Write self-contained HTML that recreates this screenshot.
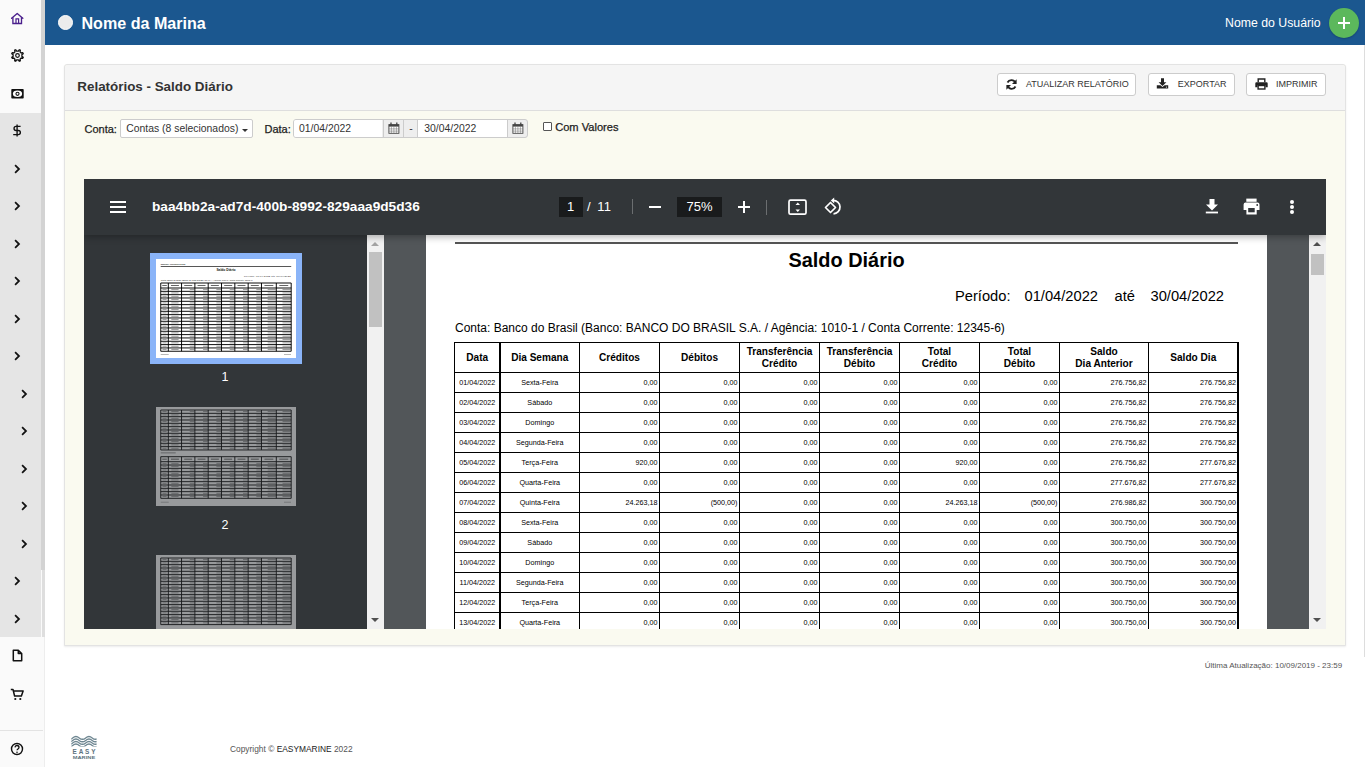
<!DOCTYPE html>
<html><head><meta charset="utf-8">
<style>
*{box-sizing:border-box;margin:0;padding:0}
html,body{width:1365px;height:767px;overflow:hidden;background:#fff;font-family:"Liberation Sans",sans-serif;color:#333}
.abs{position:absolute}
.t{position:absolute;white-space:nowrap;line-height:1}
#side{position:absolute;left:0;top:0;width:45px;height:767px;background:#fafafa;border-right:1px solid #ededed}
#sidegrey{position:absolute;left:0;top:113px;width:41px;height:524px;background:#e5e5e5}
#strip{position:absolute;left:41px;top:0;width:4px;height:570px;background:#d3d3d3}
#strip2{position:absolute;left:42px;top:570px;width:3px;height:67px;background:#dedede}
#header{position:absolute;left:45px;top:0;width:1320px;height:45px;background:#1b578f}
#panel{position:absolute;left:64px;top:64px;width:1282px;height:582px;background:#fafaf0;border:1px solid #e3e3e3;border-radius:3px 3px 0 0;box-shadow:0 1px 2px rgba(0,0,0,.08)}
#phead{position:absolute;left:0;top:0;width:1280px;height:46px;background:#f5f5f5;border-bottom:1px solid #dedede;border-radius:3px 3px 0 0}
.btn{position:absolute;top:8px;height:23px;background:#fff;border:1px solid #ccc;border-radius:3px}
.btn .t{font-size:9px;color:#333;top:6.2px}
#pdf{position:absolute;left:84px;top:179px;width:1242px;height:450px;background:#525659;overflow:hidden}
#tb{position:absolute;left:0;top:0;width:1242px;height:56px;background:#323639;box-shadow:0 2px 7px rgba(0,0,0,.3);z-index:3}
#tb .t{color:#fff}
#thumbs{position:absolute;left:0;top:56px;width:283px;height:394px;background:#323639}
.sbt{position:absolute;background:#f1f1f1;width:17px}
.sbthumb{position:absolute;background:#c1c1c1;left:2px;width:13px}
#page{position:absolute;left:342px;top:56px;width:841px;height:400px;background:#fff;overflow:hidden}
#page .t{color:#000}
.vl{position:absolute;width:1.6px;background:#000}
.hl{position:absolute;height:1.6px;background:#000}
.th{position:absolute;display:flex;align-items:center;justify-content:center;text-align:center;font-weight:bold;font-size:10.1px;line-height:11.6px;color:#000}
.td{position:absolute;height:20px;line-height:20px;font-size:7.2px;color:#000;white-space:nowrap}
.td.c{text-align:center}
.td.r{text-align:right;padding-right:2px}
</style></head><body>
<div id="side"></div>
<div id="sidegrey"></div>
<div id="strip"></div>
<div id="strip2"></div>
<!-- sidebar icons -->
<svg class="abs" style="left:11px;top:12px" width="13" height="13" viewBox="0 0 13 13"><path d="M0.6 6.2L6.2 1.5l5.6 4.7" fill="none" stroke="#4a1f8c" stroke-width="1.35" stroke-linecap="round" stroke-linejoin="round"/><path d="M1.9 5.2v6.3h8.6V5.2" fill="none" stroke="#4a1f8c" stroke-width="1.35"/><path d="M5 11.5V6.9h2.6v4.6" fill="none" stroke="#4a1f8c" stroke-width="1.2"/></svg>
<svg class="abs" style="left:11px;top:49px" width="13" height="13" viewBox="0 0 13 13"><path d="M10.91 7.38 L12.25 8.22 L11.78 9.35 L10.24 9.00 L9.00 10.24 L9.35 11.78 L8.22 12.25 L7.38 10.91 L5.62 10.91 L4.78 12.25 L3.65 11.78 L4.00 10.24 L2.76 9.00 L1.22 9.35 L0.75 8.22 L2.09 7.38 L2.09 5.62 L0.75 4.78 L1.22 3.65 L2.76 4.00 L4.00 2.76 L3.65 1.22 L4.78 0.75 L5.62 2.09 L7.38 2.09 L8.22 0.75 L9.35 1.22 L9.00 2.76 L10.24 4.00 L11.78 3.65 L12.25 4.78 L10.91 5.62Z" fill="none" stroke="#111" stroke-width="1.3" stroke-linejoin="round"/><circle cx="6.5" cy="6.5" r="1.8" fill="none" stroke="#111" stroke-width="1.2"/></svg>
<svg class="abs" style="left:11px;top:89px" width="13" height="10" viewBox="0 0 13 10"><rect x="0.3" y="0" width="12.4" height="9.6" rx="0.8" fill="#111"/><ellipse cx="6.5" cy="4.8" rx="4.6" ry="3.3" fill="#fff"/><circle cx="6.5" cy="4.8" r="2.1" fill="#111"/><circle cx="6.5" cy="4.8" r="1" fill="#fff"/></svg>
<svg class="abs" style="left:11.8px;top:124px" width="10" height="13" viewBox="0 0 10 13"><path d="M8.6 2.4H4.1a2.05 2.05 0 000 4.1h2.2a2.05 2.05 0 010 4.1H1.2M5.1 .4v12.2" fill="none" stroke="#111" stroke-width="1.35"/></svg>
<svg class="abs" style="left:14px;top:163.9px" width="7" height="10" viewBox="0 0 7 10"><path d="M1.1 1.2l3.9 3.8-3.9 3.8" fill="none" stroke="#111" stroke-width="1.75"/></svg>
<svg class="abs" style="left:14px;top:200.9px" width="7" height="10" viewBox="0 0 7 10"><path d="M1.1 1.2l3.9 3.8-3.9 3.8" fill="none" stroke="#111" stroke-width="1.75"/></svg>
<svg class="abs" style="left:14px;top:238.9px" width="7" height="10" viewBox="0 0 7 10"><path d="M1.1 1.2l3.9 3.8-3.9 3.8" fill="none" stroke="#111" stroke-width="1.75"/></svg>
<svg class="abs" style="left:14px;top:275.9px" width="7" height="10" viewBox="0 0 7 10"><path d="M1.1 1.2l3.9 3.8-3.9 3.8" fill="none" stroke="#111" stroke-width="1.75"/></svg>
<svg class="abs" style="left:14px;top:313.9px" width="7" height="10" viewBox="0 0 7 10"><path d="M1.1 1.2l3.9 3.8-3.9 3.8" fill="none" stroke="#111" stroke-width="1.75"/></svg>
<svg class="abs" style="left:14px;top:350.9px" width="7" height="10" viewBox="0 0 7 10"><path d="M1.1 1.2l3.9 3.8-3.9 3.8" fill="none" stroke="#111" stroke-width="1.75"/></svg>
<svg class="abs" style="left:21px;top:388.9px" width="7" height="10" viewBox="0 0 7 10"><path d="M1.1 1.2l3.9 3.8-3.9 3.8" fill="none" stroke="#111" stroke-width="1.75"/></svg>
<svg class="abs" style="left:21px;top:425.9px" width="7" height="10" viewBox="0 0 7 10"><path d="M1.1 1.2l3.9 3.8-3.9 3.8" fill="none" stroke="#111" stroke-width="1.75"/></svg>
<svg class="abs" style="left:21px;top:463.9px" width="7" height="10" viewBox="0 0 7 10"><path d="M1.1 1.2l3.9 3.8-3.9 3.8" fill="none" stroke="#111" stroke-width="1.75"/></svg>
<svg class="abs" style="left:21px;top:500.9px" width="7" height="10" viewBox="0 0 7 10"><path d="M1.1 1.2l3.9 3.8-3.9 3.8" fill="none" stroke="#111" stroke-width="1.75"/></svg>
<svg class="abs" style="left:21px;top:538.9px" width="7" height="10" viewBox="0 0 7 10"><path d="M1.1 1.2l3.9 3.8-3.9 3.8" fill="none" stroke="#111" stroke-width="1.75"/></svg>
<svg class="abs" style="left:14px;top:575.9px" width="7" height="10" viewBox="0 0 7 10"><path d="M1.1 1.2l3.9 3.8-3.9 3.8" fill="none" stroke="#111" stroke-width="1.75"/></svg>
<svg class="abs" style="left:14px;top:613.9px" width="7" height="10" viewBox="0 0 7 10"><path d="M1.1 1.2l3.9 3.8-3.9 3.8" fill="none" stroke="#111" stroke-width="1.75"/></svg>
<svg class="abs" style="left:12px;top:649px" width="11" height="13" viewBox="0 0 11 13"><path d="M1.3 1.2h5l3.4 3.4v7.2H1.3z M6.3 1.2v3.4h3.4" fill="none" stroke="#111" stroke-width="1.5" stroke-linejoin="round"/></svg>
<svg class="abs" style="left:10px;top:688px" width="14" height="13" viewBox="0 0 14 13"><path d="M.8 1.5h2.2l1.6 6.5h6.8l1.7-5H3.6" fill="none" stroke="#111" stroke-width="1.5" stroke-linejoin="round"/><circle cx="5.3" cy="11" r="1.1" fill="#111"/><circle cx="10.3" cy="11" r="1.1" fill="#111"/></svg>
<div class="abs" style="left:0;top:730px;width:43px;height:1px;background:#e3e3e3"></div>
<svg class="abs" style="left:10px;top:742px" width="14" height="14" viewBox="0 0 14 14"><circle cx="7" cy="7" r="5.5" fill="none" stroke="#111" stroke-width="1.4"/><path d="M5 5.4a2 2 0 114 .2c0 1.3-2 1.4-2 2.7" fill="none" stroke="#111" stroke-width="1.3"/><circle cx="7" cy="10.2" r=".8" fill="#111"/></svg>

<div id="header">
  <div class="abs" style="left:12.5px;top:15.3px;width:15px;height:15px;border-radius:50%;background:#ececec;border:1.3px solid #fff"></div>
  <div class="t" style="left:36.5px;top:14.7px;font-size:16.1px;font-weight:bold;color:#fff">Nome da Marina</div>
  <div class="t" style="left:1180px;top:17px;font-size:12.3px;color:#fff">Nome do Usuário</div>
  <div class="abs" style="left:1284px;top:8px;width:30px;height:30px;border-radius:50%;background:#5cb85c;box-shadow:0 1px 2px rgba(0,0,0,.2)"></div>
  <div class="abs" style="left:1292.5px;top:22.2px;width:12.5px;height:1.6px;background:#fff"></div>
  <div class="abs" style="left:1298px;top:16.7px;width:1.6px;height:12.5px;background:#fff"></div>
</div>

<div id="panel">
  <div id="phead">
    <div class="t" style="left:12.3px;top:14.6px;font-size:13.4px;font-weight:bold;color:#333">Relatórios - Saldo Diário</div>
    <div class="btn" style="left:931.7px;width:139.8px">
      <svg class="abs" style="left:7.5px;top:4px" width="13" height="13" viewBox="0 0 13 13"><path d="M10.3 4.8A4.3 4.3 0 002.5 4.5M2.7 8.2a4.3 4.3 0 007.8.3" fill="none" stroke="#222" stroke-width="1.8"/><path d="M11.6 1.3v4.6H7z" fill="#222"/><path d="M1.4 11.7V7.1H6z" fill="#222"/></svg>
      <div class="t" style="left:28.3px">ATUALIZAR RELATÓRIO</div>
    </div>
    <div class="btn" style="left:1083.4px;width:86.3px">
      <svg class="abs" style="left:7px;top:4px" width="13" height="11" viewBox="0 0 13 11"><path d="M5 0.3h3v3.9h2.4L6.5 8 2.6 4.2H5z" fill="#222"/><path d="M0.8 7.3h3.6l2.1 1.8 2.1-1.8h3.6v3.2H0.8z" fill="#222"/><circle cx="10.4" cy="9.1" r=".55" fill="#fff"/></svg>
      <div class="t" style="left:28.4px">EXPORTAR</div>
    </div>
    <div class="btn" style="left:1181.4px;width:79.3px">
      <svg class="abs" style="left:7.2px;top:4px" width="13" height="12" viewBox="0 0 13 12"><path d="M3.2 4.3V1h6.6v3.3" fill="none" stroke="#222" stroke-width="1.4"/><path d="M1.5 4.3h10a1.2 1.2 0 011.2 1.2v3.8h-2.2V7.2h-8v2.1H.3V5.5a1.2 1.2 0 011.2-1.2z" fill="#222"/><rect x="3.1" y="7.5" width="6.8" height="3.5" fill="none" stroke="#222" stroke-width="1.4"/></svg>
      <div class="t" style="left:28.6px">IMPRIMIR</div>
    </div>
  </div>
  <!-- filters -->
  <div class="t" style="left:19.5px;top:59.2px;font-size:11px;color:#222;-webkit-text-stroke:.25px #222">Conta:</div>
  <div class="abs" style="left:54.7px;top:54px;width:133px;height:19px;background:#fff;border:1px solid #ccc;border-radius:2px"></div>
  <div class="t" style="left:61.3px;top:58.5px;font-size:10.4px;color:#333">Contas (8 selecionados)</div>
  <div class="abs" style="left:176.5px;top:63.5px;width:0;height:0;border-left:3px solid transparent;border-right:3px solid transparent;border-top:3.5px solid #333"></div>
  <div class="t" style="left:199.5px;top:59.2px;font-size:11px;color:#222;-webkit-text-stroke:.25px #222">Data:</div>
  <div class="abs" style="left:228.4px;top:54px;width:235px;height:19px;background:#eee;border:1px solid #ccc;border-radius:3px"></div>
  <div class="abs" style="left:229.4px;top:55px;width:88px;height:17px;background:#fff;border-radius:2px 0 0 2px"></div>
  <div class="abs" style="left:317.6px;top:55px;width:1px;height:17px;background:#ccc"></div>
  <div class="abs" style="left:338.1px;top:55px;width:1px;height:17px;background:#ccc"></div>
  <div class="abs" style="left:352.1px;top:55px;width:1px;height:17px;background:#ccc"></div>
  <div class="abs" style="left:353.1px;top:55px;width:89.3px;height:17px;background:#fff"></div>
  <div class="abs" style="left:442.4px;top:55px;width:1px;height:17px;background:#ccc"></div>
  <div class="t" style="left:234px;top:58.5px;font-size:10.4px;color:#333">01/04/2022</div>
  <div class="t" style="left:359.3px;top:58.5px;font-size:10.4px;color:#333">30/04/2022</div>
  <div class="t" style="left:344.2px;top:58.5px;font-size:10.4px;color:#333">-</div>
  <svg class="abs" style="left:322.6px;top:57px" width="12" height="12" viewBox="0 0 12 12"><rect x="0.9" y="2.6" width="10" height="8.7" fill="#fff" stroke="#444" stroke-width=".9"/><rect x="0.9" y="2.6" width="10" height="2" fill="#444"/><path d="M0.9 6.9h10M0.9 9.1h10M3.4 4.5v6.8M5.9 4.5v6.8M8.4 4.5v6.8" stroke="#666" stroke-width=".5"/><path d="M3 .5v2.8M8.8 .5v2.8" stroke="#444" stroke-width="1.3"/></svg>
  <svg class="abs" style="left:447.2px;top:57px" width="12" height="12" viewBox="0 0 12 12"><rect x="0.9" y="2.6" width="10" height="8.7" fill="#fff" stroke="#444" stroke-width=".9"/><rect x="0.9" y="2.6" width="10" height="2" fill="#444"/><path d="M0.9 6.9h10M0.9 9.1h10M3.4 4.5v6.8M5.9 4.5v6.8M8.4 4.5v6.8" stroke="#666" stroke-width=".5"/><path d="M3 .5v2.8M8.8 .5v2.8" stroke="#444" stroke-width="1.3"/></svg>
  <div class="abs" style="left:478.2px;top:57.4px;width:8.8px;height:8.8px;background:#fff;border:1px solid #555;border-radius:1px"></div>
  <div class="t" style="left:490.2px;top:57px;font-size:11.1px;color:#222;-webkit-text-stroke:.25px #222">Com Valores</div>
</div>

<div id="pdf">
  <div id="tb">
    <div class="abs" style="left:26px;top:22px;width:16px;height:2px;background:#fff"></div>
    <div class="abs" style="left:26px;top:27px;width:16px;height:2px;background:#fff"></div>
    <div class="abs" style="left:26px;top:32px;width:16px;height:2px;background:#fff"></div>
    <div class="t" style="left:68px;top:20.5px;font-size:13.7px;font-weight:bold">baa4bb2a-ad7d-400b-8992-829aaa9d5d36</div>
    <div class="abs" style="left:475px;top:18px;width:24px;height:20px;background:#191b1c"></div>
    <div class="t" style="left:483px;top:21px;font-size:13px">1</div>
    <div class="t" style="left:503px;top:21px;font-size:13px">/</div><div class="t" style="left:513.3px;top:21px;font-size:13px;letter-spacing:.2px">11</div>
    <div class="abs" style="left:547.7px;top:20px;width:1px;height:15px;background:#6b6e70"></div>
    <div class="abs" style="left:565px;top:27.2px;width:12px;height:1.5px;background:#fff"></div>
    <div class="abs" style="left:593px;top:18px;width:45px;height:20px;background:#191b1c"></div>
    <div class="t" style="left:602.5px;top:21px;font-size:13px">75%</div>
    <div class="abs" style="left:654px;top:27.2px;width:12px;height:1.5px;background:#fff"></div>
    <div class="abs" style="left:659.3px;top:22px;width:1.5px;height:12px;background:#fff"></div>
    <div class="abs" style="left:682px;top:21px;width:1px;height:15px;background:#6b6e70"></div>
    <svg class="abs" style="left:703.5px;top:19.5px" width="20" height="17" viewBox="0 0 20 17"><rect x="1" y="1.2" width="17" height="14" rx="1.5" fill="none" stroke="#fff" stroke-width="1.7"/><path d="M7.5 6l2.3-2.4L12 6zM7.5 10.5l2.3 2.4 2.2-2.4z" fill="#fff"/></svg>
    <svg class="abs" style="left:739.5px;top:18px" width="20" height="19" viewBox="0 0 20 19"><path d="M1.5 10.5L6.5 5.5l5 5-5 5z" fill="none" stroke="#fff" stroke-width="1.7" stroke-linejoin="round"/><path d="M9 3.3a6.5 6.5 0 11.5 13.5" fill="none" stroke="#fff" stroke-width="1.7"/><path d="M7.5 0.8v5.3h5" fill="none" stroke="#fff" stroke-width="0"/><path d="M10.2 0.5L6.8 3.4l3.4 3z" fill="#fff"/></svg>
    <svg class="abs" style="left:1121px;top:19px" width="14" height="17" viewBox="0 0 14 17"><path d="M4.5 1h5v5.5h3.5L7 12.5 1 6.5h3.5z" fill="#fff"/><rect x="0.8" y="13.6" width="12.2" height="1.8" fill="#fff"/></svg>
    <svg class="abs" style="left:1159px;top:19px" width="18" height="17" viewBox="0 0 18 17"><rect x="3.3" y="0.6" width="10.3" height="3.2" fill="#fff"/><path d="M2.5 4.6h12a2 2 0 012 2v5.5h-2.8v4.3H3.4v-4.3H0.6V6.6a2 2 0 012-2z" fill="#fff"/><rect x="5.2" y="10" width="6.5" height="4.3" fill="#323639"/><circle cx="14.2" cy="7" r=".9" fill="#323639"/></svg>
    <circle></circle>
    <div class="abs" style="left:1206px;top:20.7px;width:4px;height:4px;border-radius:50%;background:#fff"></div>
    <div class="abs" style="left:1206px;top:26px;width:4px;height:4px;border-radius:50%;background:#fff"></div>
    <div class="abs" style="left:1206px;top:31.3px;width:4px;height:4px;border-radius:50%;background:#fff"></div>
  </div>
  <div id="thumbs">
    <div class="abs" style="left:66px;top:18px;width:152px;height:111px;background:#8ab4f8"></div>
<svg class="abs" style="left:72px;top:24px" width="140" height="99" viewBox="0 0 140 99"><rect x="0" y="0" width="140" height="99" fill="#fff"/><text x="4.7" y="5.6" font-family="Liberation Sans" font-size="2" font-weight="bold" fill="#333">Emissor: 10/09/2019 23:59</text><rect x="4.7" y="7.1" width="130.5" height="0.9" fill="#444"/><text x="70" y="12.4" text-anchor="middle" font-family="Liberation Sans" font-size="3.3" font-weight="bold" fill="#111">Saldo Diário</text><text x="88" y="18.1" font-family="Liberation Sans" font-size="2.45" fill="#222" textLength="46.6" lengthAdjust="spacing">Período:   01/04/2022   até   30/04/2022</text><text x="4.7" y="22.2" font-family="Liberation Sans" font-size="2" fill="#222" textLength="92" lengthAdjust="spacing">Conta: Banco do Brasil (Banco: BANCO DO BRASIL S.A. / Agência: 1010-1 / Conta Corrente: 12345-6)</text><rect x="6.26" y="26.00" width="4.55" height="0.9" fill="#555"/><rect x="14.97" y="26.00" width="7.94" height="0.9" fill="#555"/><rect x="28.22" y="26.00" width="7.99" height="0.9" fill="#555"/><rect x="41.54" y="26.00" width="7.99" height="0.9" fill="#555"/><rect x="54.86" y="26.00" width="7.99" height="0.9" fill="#555"/><rect x="68.18" y="26.00" width="7.99" height="0.9" fill="#555"/><rect x="81.50" y="26.00" width="7.99" height="0.9" fill="#555"/><rect x="94.82" y="26.00" width="7.99" height="0.9" fill="#555"/><rect x="108.44" y="26.00" width="8.89" height="0.9" fill="#555"/><rect x="123.28" y="26.00" width="8.94" height="0.9" fill="#555"/><rect x="6.45" y="30.21" width="4.17" height="0.8" fill="#888"/><rect x="15.30" y="30.21" width="7.28" height="0.8" fill="#888"/><rect x="33.72" y="30.21" width="4.66" height="0.8" fill="#888"/><rect x="47.04" y="30.21" width="4.66" height="0.8" fill="#888"/><rect x="60.36" y="30.21" width="4.66" height="0.8" fill="#888"/><rect x="73.68" y="30.21" width="4.66" height="0.8" fill="#888"/><rect x="87.00" y="30.21" width="4.66" height="0.8" fill="#888"/><rect x="100.32" y="30.21" width="4.66" height="0.8" fill="#888"/><rect x="111.65" y="30.21" width="8.15" height="0.8" fill="#888"/><rect x="126.50" y="30.21" width="8.20" height="0.8" fill="#888"/><rect x="6.45" y="33.54" width="4.17" height="0.8" fill="#888"/><rect x="15.30" y="33.54" width="7.28" height="0.8" fill="#888"/><rect x="33.72" y="33.54" width="4.66" height="0.8" fill="#888"/><rect x="47.04" y="33.54" width="4.66" height="0.8" fill="#888"/><rect x="60.36" y="33.54" width="4.66" height="0.8" fill="#888"/><rect x="73.68" y="33.54" width="4.66" height="0.8" fill="#888"/><rect x="87.00" y="33.54" width="4.66" height="0.8" fill="#888"/><rect x="100.32" y="33.54" width="4.66" height="0.8" fill="#888"/><rect x="111.65" y="33.54" width="8.15" height="0.8" fill="#888"/><rect x="126.50" y="33.54" width="8.20" height="0.8" fill="#888"/><rect x="6.45" y="36.87" width="4.17" height="0.8" fill="#888"/><rect x="15.30" y="36.87" width="7.28" height="0.8" fill="#888"/><rect x="33.72" y="36.87" width="4.66" height="0.8" fill="#888"/><rect x="47.04" y="36.87" width="4.66" height="0.8" fill="#888"/><rect x="60.36" y="36.87" width="4.66" height="0.8" fill="#888"/><rect x="73.68" y="36.87" width="4.66" height="0.8" fill="#888"/><rect x="87.00" y="36.87" width="4.66" height="0.8" fill="#888"/><rect x="100.32" y="36.87" width="4.66" height="0.8" fill="#888"/><rect x="111.65" y="36.87" width="8.15" height="0.8" fill="#888"/><rect x="126.50" y="36.87" width="8.20" height="0.8" fill="#888"/><rect x="6.45" y="40.20" width="4.17" height="0.8" fill="#888"/><rect x="15.30" y="40.20" width="7.28" height="0.8" fill="#888"/><rect x="33.72" y="40.20" width="4.66" height="0.8" fill="#888"/><rect x="47.04" y="40.20" width="4.66" height="0.8" fill="#888"/><rect x="60.36" y="40.20" width="4.66" height="0.8" fill="#888"/><rect x="73.68" y="40.20" width="4.66" height="0.8" fill="#888"/><rect x="87.00" y="40.20" width="4.66" height="0.8" fill="#888"/><rect x="100.32" y="40.20" width="4.66" height="0.8" fill="#888"/><rect x="111.65" y="40.20" width="8.15" height="0.8" fill="#888"/><rect x="126.50" y="40.20" width="8.20" height="0.8" fill="#888"/><rect x="6.45" y="43.53" width="4.17" height="0.8" fill="#888"/><rect x="15.30" y="43.53" width="7.28" height="0.8" fill="#888"/><rect x="33.72" y="43.53" width="4.66" height="0.8" fill="#888"/><rect x="47.04" y="43.53" width="4.66" height="0.8" fill="#888"/><rect x="60.36" y="43.53" width="4.66" height="0.8" fill="#888"/><rect x="73.68" y="43.53" width="4.66" height="0.8" fill="#888"/><rect x="87.00" y="43.53" width="4.66" height="0.8" fill="#888"/><rect x="100.32" y="43.53" width="4.66" height="0.8" fill="#888"/><rect x="111.65" y="43.53" width="8.15" height="0.8" fill="#888"/><rect x="126.50" y="43.53" width="8.20" height="0.8" fill="#888"/><rect x="6.45" y="46.86" width="4.17" height="0.8" fill="#888"/><rect x="15.30" y="46.86" width="7.28" height="0.8" fill="#888"/><rect x="33.72" y="46.86" width="4.66" height="0.8" fill="#888"/><rect x="47.04" y="46.86" width="4.66" height="0.8" fill="#888"/><rect x="60.36" y="46.86" width="4.66" height="0.8" fill="#888"/><rect x="73.68" y="46.86" width="4.66" height="0.8" fill="#888"/><rect x="87.00" y="46.86" width="4.66" height="0.8" fill="#888"/><rect x="100.32" y="46.86" width="4.66" height="0.8" fill="#888"/><rect x="111.65" y="46.86" width="8.15" height="0.8" fill="#888"/><rect x="126.50" y="46.86" width="8.20" height="0.8" fill="#888"/><rect x="6.45" y="50.19" width="4.17" height="0.8" fill="#888"/><rect x="15.30" y="50.19" width="7.28" height="0.8" fill="#888"/><rect x="33.72" y="50.19" width="4.66" height="0.8" fill="#888"/><rect x="47.04" y="50.19" width="4.66" height="0.8" fill="#888"/><rect x="60.36" y="50.19" width="4.66" height="0.8" fill="#888"/><rect x="73.68" y="50.19" width="4.66" height="0.8" fill="#888"/><rect x="87.00" y="50.19" width="4.66" height="0.8" fill="#888"/><rect x="100.32" y="50.19" width="4.66" height="0.8" fill="#888"/><rect x="111.65" y="50.19" width="8.15" height="0.8" fill="#888"/><rect x="126.50" y="50.19" width="8.20" height="0.8" fill="#888"/><rect x="6.45" y="53.52" width="4.17" height="0.8" fill="#888"/><rect x="15.30" y="53.52" width="7.28" height="0.8" fill="#888"/><rect x="33.72" y="53.52" width="4.66" height="0.8" fill="#888"/><rect x="47.04" y="53.52" width="4.66" height="0.8" fill="#888"/><rect x="60.36" y="53.52" width="4.66" height="0.8" fill="#888"/><rect x="73.68" y="53.52" width="4.66" height="0.8" fill="#888"/><rect x="87.00" y="53.52" width="4.66" height="0.8" fill="#888"/><rect x="100.32" y="53.52" width="4.66" height="0.8" fill="#888"/><rect x="111.65" y="53.52" width="8.15" height="0.8" fill="#888"/><rect x="126.50" y="53.52" width="8.20" height="0.8" fill="#888"/><rect x="6.45" y="56.85" width="4.17" height="0.8" fill="#888"/><rect x="15.30" y="56.85" width="7.28" height="0.8" fill="#888"/><rect x="33.72" y="56.85" width="4.66" height="0.8" fill="#888"/><rect x="47.04" y="56.85" width="4.66" height="0.8" fill="#888"/><rect x="60.36" y="56.85" width="4.66" height="0.8" fill="#888"/><rect x="73.68" y="56.85" width="4.66" height="0.8" fill="#888"/><rect x="87.00" y="56.85" width="4.66" height="0.8" fill="#888"/><rect x="100.32" y="56.85" width="4.66" height="0.8" fill="#888"/><rect x="111.65" y="56.85" width="8.15" height="0.8" fill="#888"/><rect x="126.50" y="56.85" width="8.20" height="0.8" fill="#888"/><rect x="6.45" y="60.18" width="4.17" height="0.8" fill="#888"/><rect x="15.30" y="60.18" width="7.28" height="0.8" fill="#888"/><rect x="33.72" y="60.18" width="4.66" height="0.8" fill="#888"/><rect x="47.04" y="60.18" width="4.66" height="0.8" fill="#888"/><rect x="60.36" y="60.18" width="4.66" height="0.8" fill="#888"/><rect x="73.68" y="60.18" width="4.66" height="0.8" fill="#888"/><rect x="87.00" y="60.18" width="4.66" height="0.8" fill="#888"/><rect x="100.32" y="60.18" width="4.66" height="0.8" fill="#888"/><rect x="111.65" y="60.18" width="8.15" height="0.8" fill="#888"/><rect x="126.50" y="60.18" width="8.20" height="0.8" fill="#888"/><rect x="6.45" y="63.51" width="4.17" height="0.8" fill="#888"/><rect x="15.30" y="63.51" width="7.28" height="0.8" fill="#888"/><rect x="33.72" y="63.51" width="4.66" height="0.8" fill="#888"/><rect x="47.04" y="63.51" width="4.66" height="0.8" fill="#888"/><rect x="60.36" y="63.51" width="4.66" height="0.8" fill="#888"/><rect x="73.68" y="63.51" width="4.66" height="0.8" fill="#888"/><rect x="87.00" y="63.51" width="4.66" height="0.8" fill="#888"/><rect x="100.32" y="63.51" width="4.66" height="0.8" fill="#888"/><rect x="111.65" y="63.51" width="8.15" height="0.8" fill="#888"/><rect x="126.50" y="63.51" width="8.20" height="0.8" fill="#888"/><rect x="6.45" y="66.84" width="4.17" height="0.8" fill="#888"/><rect x="15.30" y="66.84" width="7.28" height="0.8" fill="#888"/><rect x="33.72" y="66.84" width="4.66" height="0.8" fill="#888"/><rect x="47.04" y="66.84" width="4.66" height="0.8" fill="#888"/><rect x="60.36" y="66.84" width="4.66" height="0.8" fill="#888"/><rect x="73.68" y="66.84" width="4.66" height="0.8" fill="#888"/><rect x="87.00" y="66.84" width="4.66" height="0.8" fill="#888"/><rect x="100.32" y="66.84" width="4.66" height="0.8" fill="#888"/><rect x="111.65" y="66.84" width="8.15" height="0.8" fill="#888"/><rect x="126.50" y="66.84" width="8.20" height="0.8" fill="#888"/><rect x="6.45" y="70.17" width="4.17" height="0.8" fill="#888"/><rect x="15.30" y="70.17" width="7.28" height="0.8" fill="#888"/><rect x="33.72" y="70.17" width="4.66" height="0.8" fill="#888"/><rect x="47.04" y="70.17" width="4.66" height="0.8" fill="#888"/><rect x="60.36" y="70.17" width="4.66" height="0.8" fill="#888"/><rect x="73.68" y="70.17" width="4.66" height="0.8" fill="#888"/><rect x="87.00" y="70.17" width="4.66" height="0.8" fill="#888"/><rect x="100.32" y="70.17" width="4.66" height="0.8" fill="#888"/><rect x="111.65" y="70.17" width="8.15" height="0.8" fill="#888"/><rect x="126.50" y="70.17" width="8.20" height="0.8" fill="#888"/><rect x="6.45" y="73.50" width="4.17" height="0.8" fill="#888"/><rect x="15.30" y="73.50" width="7.28" height="0.8" fill="#888"/><rect x="33.72" y="73.50" width="4.66" height="0.8" fill="#888"/><rect x="47.04" y="73.50" width="4.66" height="0.8" fill="#888"/><rect x="60.36" y="73.50" width="4.66" height="0.8" fill="#888"/><rect x="73.68" y="73.50" width="4.66" height="0.8" fill="#888"/><rect x="87.00" y="73.50" width="4.66" height="0.8" fill="#888"/><rect x="100.32" y="73.50" width="4.66" height="0.8" fill="#888"/><rect x="111.65" y="73.50" width="8.15" height="0.8" fill="#888"/><rect x="126.50" y="73.50" width="8.20" height="0.8" fill="#888"/><rect x="6.45" y="76.83" width="4.17" height="0.8" fill="#888"/><rect x="15.30" y="76.83" width="7.28" height="0.8" fill="#888"/><rect x="33.72" y="76.83" width="4.66" height="0.8" fill="#888"/><rect x="47.04" y="76.83" width="4.66" height="0.8" fill="#888"/><rect x="60.36" y="76.83" width="4.66" height="0.8" fill="#888"/><rect x="73.68" y="76.83" width="4.66" height="0.8" fill="#888"/><rect x="87.00" y="76.83" width="4.66" height="0.8" fill="#888"/><rect x="100.32" y="76.83" width="4.66" height="0.8" fill="#888"/><rect x="111.65" y="76.83" width="8.15" height="0.8" fill="#888"/><rect x="126.50" y="76.83" width="8.20" height="0.8" fill="#888"/><rect x="6.45" y="80.16" width="4.17" height="0.8" fill="#888"/><rect x="15.30" y="80.16" width="7.28" height="0.8" fill="#888"/><rect x="33.72" y="80.16" width="4.66" height="0.8" fill="#888"/><rect x="47.04" y="80.16" width="4.66" height="0.8" fill="#888"/><rect x="60.36" y="80.16" width="4.66" height="0.8" fill="#888"/><rect x="73.68" y="80.16" width="4.66" height="0.8" fill="#888"/><rect x="87.00" y="80.16" width="4.66" height="0.8" fill="#888"/><rect x="100.32" y="80.16" width="4.66" height="0.8" fill="#888"/><rect x="111.65" y="80.16" width="8.15" height="0.8" fill="#888"/><rect x="126.50" y="80.16" width="8.20" height="0.8" fill="#888"/><rect x="6.45" y="83.49" width="4.17" height="0.8" fill="#888"/><rect x="15.30" y="83.49" width="7.28" height="0.8" fill="#888"/><rect x="33.72" y="83.49" width="4.66" height="0.8" fill="#888"/><rect x="47.04" y="83.49" width="4.66" height="0.8" fill="#888"/><rect x="60.36" y="83.49" width="4.66" height="0.8" fill="#888"/><rect x="73.68" y="83.49" width="4.66" height="0.8" fill="#888"/><rect x="87.00" y="83.49" width="4.66" height="0.8" fill="#888"/><rect x="100.32" y="83.49" width="4.66" height="0.8" fill="#888"/><rect x="111.65" y="83.49" width="8.15" height="0.8" fill="#888"/><rect x="126.50" y="83.49" width="8.20" height="0.8" fill="#888"/><rect x="6.45" y="86.82" width="4.17" height="0.8" fill="#888"/><rect x="15.30" y="86.82" width="7.28" height="0.8" fill="#888"/><rect x="33.72" y="86.82" width="4.66" height="0.8" fill="#888"/><rect x="47.04" y="86.82" width="4.66" height="0.8" fill="#888"/><rect x="60.36" y="86.82" width="4.66" height="0.8" fill="#888"/><rect x="73.68" y="86.82" width="4.66" height="0.8" fill="#888"/><rect x="87.00" y="86.82" width="4.66" height="0.8" fill="#888"/><rect x="100.32" y="86.82" width="4.66" height="0.8" fill="#888"/><rect x="111.65" y="86.82" width="8.15" height="0.8" fill="#888"/><rect x="126.50" y="86.82" width="8.20" height="0.8" fill="#888"/><rect x="6.45" y="90.15" width="4.17" height="0.8" fill="#888"/><rect x="15.30" y="90.15" width="7.28" height="0.8" fill="#888"/><rect x="33.72" y="90.15" width="4.66" height="0.8" fill="#888"/><rect x="47.04" y="90.15" width="4.66" height="0.8" fill="#888"/><rect x="60.36" y="90.15" width="4.66" height="0.8" fill="#888"/><rect x="73.68" y="90.15" width="4.66" height="0.8" fill="#888"/><rect x="87.00" y="90.15" width="4.66" height="0.8" fill="#888"/><rect x="100.32" y="90.15" width="4.66" height="0.8" fill="#888"/><rect x="111.65" y="90.15" width="8.15" height="0.8" fill="#888"/><rect x="126.50" y="90.15" width="8.20" height="0.8" fill="#888"/><line x1="4.75" y1="24.00" x2="4.75" y2="92.26" stroke="#000" stroke-width="0.95"/><line x1="12.32" y1="24.00" x2="12.32" y2="92.26" stroke="#000" stroke-width="0.95"/><line x1="25.56" y1="24.00" x2="25.56" y2="92.26" stroke="#000" stroke-width="0.95"/><line x1="38.88" y1="24.00" x2="38.88" y2="92.26" stroke="#000" stroke-width="0.95"/><line x1="52.20" y1="24.00" x2="52.20" y2="92.26" stroke="#000" stroke-width="0.95"/><line x1="65.52" y1="24.00" x2="65.52" y2="92.26" stroke="#000" stroke-width="0.95"/><line x1="78.84" y1="24.00" x2="78.84" y2="92.26" stroke="#000" stroke-width="0.95"/><line x1="92.16" y1="24.00" x2="92.16" y2="92.26" stroke="#000" stroke-width="0.95"/><line x1="105.48" y1="24.00" x2="105.48" y2="92.26" stroke="#000" stroke-width="0.95"/><line x1="120.30" y1="24.00" x2="120.30" y2="92.26" stroke="#000" stroke-width="0.95"/><line x1="135.20" y1="24.00" x2="135.20" y2="92.26" stroke="#000" stroke-width="0.95"/><line x1="4.75" y1="24.00" x2="135.20" y2="24.00" stroke="#000" stroke-width="0.95"/><line x1="4.75" y1="29.00" x2="135.20" y2="29.00" stroke="#000" stroke-width="0.95"/><line x1="4.75" y1="32.33" x2="135.20" y2="32.33" stroke="#000" stroke-width="0.95"/><line x1="4.75" y1="35.66" x2="135.20" y2="35.66" stroke="#000" stroke-width="0.95"/><line x1="4.75" y1="38.98" x2="135.20" y2="38.98" stroke="#000" stroke-width="0.95"/><line x1="4.75" y1="42.31" x2="135.20" y2="42.31" stroke="#000" stroke-width="0.95"/><line x1="4.75" y1="45.64" x2="135.20" y2="45.64" stroke="#000" stroke-width="0.95"/><line x1="4.75" y1="48.97" x2="135.20" y2="48.97" stroke="#000" stroke-width="0.95"/><line x1="4.75" y1="52.30" x2="135.20" y2="52.30" stroke="#000" stroke-width="0.95"/><line x1="4.75" y1="55.63" x2="135.20" y2="55.63" stroke="#000" stroke-width="0.95"/><line x1="4.75" y1="58.96" x2="135.20" y2="58.96" stroke="#000" stroke-width="0.95"/><line x1="4.75" y1="62.29" x2="135.20" y2="62.29" stroke="#000" stroke-width="0.95"/><line x1="4.75" y1="65.62" x2="135.20" y2="65.62" stroke="#000" stroke-width="0.95"/><line x1="4.75" y1="68.95" x2="135.20" y2="68.95" stroke="#000" stroke-width="0.95"/><line x1="4.75" y1="72.28" x2="135.20" y2="72.28" stroke="#000" stroke-width="0.95"/><line x1="4.75" y1="75.61" x2="135.20" y2="75.61" stroke="#000" stroke-width="0.95"/><line x1="4.75" y1="78.94" x2="135.20" y2="78.94" stroke="#000" stroke-width="0.95"/><line x1="4.75" y1="82.27" x2="135.20" y2="82.27" stroke="#000" stroke-width="0.95"/><line x1="4.75" y1="85.60" x2="135.20" y2="85.60" stroke="#000" stroke-width="0.95"/><line x1="4.75" y1="88.93" x2="135.20" y2="88.93" stroke="#000" stroke-width="0.95"/><line x1="4.75" y1="92.26" x2="135.20" y2="92.26" stroke="#000" stroke-width="0.95"/><rect x="4.7" y="95" width="8" height="0.7" fill="#999"/><rect x="128" y="95" width="7" height="0.7" fill="#999"/></svg>
<svg class="abs" style="left:72px;top:172px" width="140" height="99" viewBox="0 0 140 99"><rect x="0" y="0" width="140" height="99" fill="#fff"/><rect x="6.45" y="4.21" width="4.17" height="0.8" fill="#888"/><rect x="15.30" y="4.21" width="7.28" height="0.8" fill="#888"/><rect x="33.72" y="4.21" width="4.66" height="0.8" fill="#888"/><rect x="47.04" y="4.21" width="4.66" height="0.8" fill="#888"/><rect x="60.36" y="4.21" width="4.66" height="0.8" fill="#888"/><rect x="73.68" y="4.21" width="4.66" height="0.8" fill="#888"/><rect x="87.00" y="4.21" width="4.66" height="0.8" fill="#888"/><rect x="100.32" y="4.21" width="4.66" height="0.8" fill="#888"/><rect x="111.65" y="4.21" width="8.15" height="0.8" fill="#888"/><rect x="126.50" y="4.21" width="8.20" height="0.8" fill="#888"/><rect x="6.45" y="7.54" width="4.17" height="0.8" fill="#888"/><rect x="15.30" y="7.54" width="7.28" height="0.8" fill="#888"/><rect x="33.72" y="7.54" width="4.66" height="0.8" fill="#888"/><rect x="47.04" y="7.54" width="4.66" height="0.8" fill="#888"/><rect x="60.36" y="7.54" width="4.66" height="0.8" fill="#888"/><rect x="73.68" y="7.54" width="4.66" height="0.8" fill="#888"/><rect x="87.00" y="7.54" width="4.66" height="0.8" fill="#888"/><rect x="100.32" y="7.54" width="4.66" height="0.8" fill="#888"/><rect x="111.65" y="7.54" width="8.15" height="0.8" fill="#888"/><rect x="126.50" y="7.54" width="8.20" height="0.8" fill="#888"/><rect x="6.45" y="10.88" width="4.17" height="0.8" fill="#888"/><rect x="15.30" y="10.88" width="7.28" height="0.8" fill="#888"/><rect x="33.72" y="10.88" width="4.66" height="0.8" fill="#888"/><rect x="47.04" y="10.88" width="4.66" height="0.8" fill="#888"/><rect x="60.36" y="10.88" width="4.66" height="0.8" fill="#888"/><rect x="73.68" y="10.88" width="4.66" height="0.8" fill="#888"/><rect x="87.00" y="10.88" width="4.66" height="0.8" fill="#888"/><rect x="100.32" y="10.88" width="4.66" height="0.8" fill="#888"/><rect x="111.65" y="10.88" width="8.15" height="0.8" fill="#888"/><rect x="126.50" y="10.88" width="8.20" height="0.8" fill="#888"/><rect x="6.45" y="14.21" width="4.17" height="0.8" fill="#888"/><rect x="15.30" y="14.21" width="7.28" height="0.8" fill="#888"/><rect x="33.72" y="14.21" width="4.66" height="0.8" fill="#888"/><rect x="47.04" y="14.21" width="4.66" height="0.8" fill="#888"/><rect x="60.36" y="14.21" width="4.66" height="0.8" fill="#888"/><rect x="73.68" y="14.21" width="4.66" height="0.8" fill="#888"/><rect x="87.00" y="14.21" width="4.66" height="0.8" fill="#888"/><rect x="100.32" y="14.21" width="4.66" height="0.8" fill="#888"/><rect x="111.65" y="14.21" width="8.15" height="0.8" fill="#888"/><rect x="126.50" y="14.21" width="8.20" height="0.8" fill="#888"/><rect x="6.45" y="17.54" width="4.17" height="0.8" fill="#888"/><rect x="15.30" y="17.54" width="7.28" height="0.8" fill="#888"/><rect x="33.72" y="17.54" width="4.66" height="0.8" fill="#888"/><rect x="47.04" y="17.54" width="4.66" height="0.8" fill="#888"/><rect x="60.36" y="17.54" width="4.66" height="0.8" fill="#888"/><rect x="73.68" y="17.54" width="4.66" height="0.8" fill="#888"/><rect x="87.00" y="17.54" width="4.66" height="0.8" fill="#888"/><rect x="100.32" y="17.54" width="4.66" height="0.8" fill="#888"/><rect x="111.65" y="17.54" width="8.15" height="0.8" fill="#888"/><rect x="126.50" y="17.54" width="8.20" height="0.8" fill="#888"/><rect x="6.45" y="20.86" width="4.17" height="0.8" fill="#888"/><rect x="15.30" y="20.86" width="7.28" height="0.8" fill="#888"/><rect x="33.72" y="20.86" width="4.66" height="0.8" fill="#888"/><rect x="47.04" y="20.86" width="4.66" height="0.8" fill="#888"/><rect x="60.36" y="20.86" width="4.66" height="0.8" fill="#888"/><rect x="73.68" y="20.86" width="4.66" height="0.8" fill="#888"/><rect x="87.00" y="20.86" width="4.66" height="0.8" fill="#888"/><rect x="100.32" y="20.86" width="4.66" height="0.8" fill="#888"/><rect x="111.65" y="20.86" width="8.15" height="0.8" fill="#888"/><rect x="126.50" y="20.86" width="8.20" height="0.8" fill="#888"/><rect x="6.45" y="24.19" width="4.17" height="0.8" fill="#888"/><rect x="15.30" y="24.19" width="7.28" height="0.8" fill="#888"/><rect x="33.72" y="24.19" width="4.66" height="0.8" fill="#888"/><rect x="47.04" y="24.19" width="4.66" height="0.8" fill="#888"/><rect x="60.36" y="24.19" width="4.66" height="0.8" fill="#888"/><rect x="73.68" y="24.19" width="4.66" height="0.8" fill="#888"/><rect x="87.00" y="24.19" width="4.66" height="0.8" fill="#888"/><rect x="100.32" y="24.19" width="4.66" height="0.8" fill="#888"/><rect x="111.65" y="24.19" width="8.15" height="0.8" fill="#888"/><rect x="126.50" y="24.19" width="8.20" height="0.8" fill="#888"/><rect x="6.45" y="27.52" width="4.17" height="0.8" fill="#888"/><rect x="15.30" y="27.52" width="7.28" height="0.8" fill="#888"/><rect x="33.72" y="27.52" width="4.66" height="0.8" fill="#888"/><rect x="47.04" y="27.52" width="4.66" height="0.8" fill="#888"/><rect x="60.36" y="27.52" width="4.66" height="0.8" fill="#888"/><rect x="73.68" y="27.52" width="4.66" height="0.8" fill="#888"/><rect x="87.00" y="27.52" width="4.66" height="0.8" fill="#888"/><rect x="100.32" y="27.52" width="4.66" height="0.8" fill="#888"/><rect x="111.65" y="27.52" width="8.15" height="0.8" fill="#888"/><rect x="126.50" y="27.52" width="8.20" height="0.8" fill="#888"/><rect x="6.45" y="30.85" width="4.17" height="0.8" fill="#888"/><rect x="15.30" y="30.85" width="7.28" height="0.8" fill="#888"/><rect x="33.72" y="30.85" width="4.66" height="0.8" fill="#888"/><rect x="47.04" y="30.85" width="4.66" height="0.8" fill="#888"/><rect x="60.36" y="30.85" width="4.66" height="0.8" fill="#888"/><rect x="73.68" y="30.85" width="4.66" height="0.8" fill="#888"/><rect x="87.00" y="30.85" width="4.66" height="0.8" fill="#888"/><rect x="100.32" y="30.85" width="4.66" height="0.8" fill="#888"/><rect x="111.65" y="30.85" width="8.15" height="0.8" fill="#888"/><rect x="126.50" y="30.85" width="8.20" height="0.8" fill="#888"/><rect x="6.45" y="34.18" width="4.17" height="0.8" fill="#888"/><rect x="15.30" y="34.18" width="7.28" height="0.8" fill="#888"/><rect x="33.72" y="34.18" width="4.66" height="0.8" fill="#888"/><rect x="47.04" y="34.18" width="4.66" height="0.8" fill="#888"/><rect x="60.36" y="34.18" width="4.66" height="0.8" fill="#888"/><rect x="73.68" y="34.18" width="4.66" height="0.8" fill="#888"/><rect x="87.00" y="34.18" width="4.66" height="0.8" fill="#888"/><rect x="100.32" y="34.18" width="4.66" height="0.8" fill="#888"/><rect x="111.65" y="34.18" width="8.15" height="0.8" fill="#888"/><rect x="126.50" y="34.18" width="8.20" height="0.8" fill="#888"/><rect x="6.45" y="37.51" width="4.17" height="0.8" fill="#888"/><rect x="15.30" y="37.51" width="7.28" height="0.8" fill="#888"/><rect x="33.72" y="37.51" width="4.66" height="0.8" fill="#888"/><rect x="47.04" y="37.51" width="4.66" height="0.8" fill="#888"/><rect x="60.36" y="37.51" width="4.66" height="0.8" fill="#888"/><rect x="73.68" y="37.51" width="4.66" height="0.8" fill="#888"/><rect x="87.00" y="37.51" width="4.66" height="0.8" fill="#888"/><rect x="100.32" y="37.51" width="4.66" height="0.8" fill="#888"/><rect x="111.65" y="37.51" width="8.15" height="0.8" fill="#888"/><rect x="126.50" y="37.51" width="8.20" height="0.8" fill="#888"/><rect x="6.45" y="40.84" width="4.17" height="0.8" fill="#888"/><rect x="15.30" y="40.84" width="7.28" height="0.8" fill="#888"/><rect x="33.72" y="40.84" width="4.66" height="0.8" fill="#888"/><rect x="47.04" y="40.84" width="4.66" height="0.8" fill="#888"/><rect x="60.36" y="40.84" width="4.66" height="0.8" fill="#888"/><rect x="73.68" y="40.84" width="4.66" height="0.8" fill="#888"/><rect x="87.00" y="40.84" width="4.66" height="0.8" fill="#888"/><rect x="100.32" y="40.84" width="4.66" height="0.8" fill="#888"/><rect x="111.65" y="40.84" width="8.15" height="0.8" fill="#888"/><rect x="126.50" y="40.84" width="8.20" height="0.8" fill="#888"/><line x1="4.75" y1="3.00" x2="4.75" y2="42.96" stroke="#000" stroke-width="0.95"/><line x1="12.32" y1="3.00" x2="12.32" y2="42.96" stroke="#000" stroke-width="0.95"/><line x1="25.56" y1="3.00" x2="25.56" y2="42.96" stroke="#000" stroke-width="0.95"/><line x1="38.88" y1="3.00" x2="38.88" y2="42.96" stroke="#000" stroke-width="0.95"/><line x1="52.20" y1="3.00" x2="52.20" y2="42.96" stroke="#000" stroke-width="0.95"/><line x1="65.52" y1="3.00" x2="65.52" y2="42.96" stroke="#000" stroke-width="0.95"/><line x1="78.84" y1="3.00" x2="78.84" y2="42.96" stroke="#000" stroke-width="0.95"/><line x1="92.16" y1="3.00" x2="92.16" y2="42.96" stroke="#000" stroke-width="0.95"/><line x1="105.48" y1="3.00" x2="105.48" y2="42.96" stroke="#000" stroke-width="0.95"/><line x1="120.30" y1="3.00" x2="120.30" y2="42.96" stroke="#000" stroke-width="0.95"/><line x1="135.20" y1="3.00" x2="135.20" y2="42.96" stroke="#000" stroke-width="0.95"/><line x1="4.75" y1="3.00" x2="135.20" y2="3.00" stroke="#000" stroke-width="0.95"/><line x1="4.75" y1="6.33" x2="135.20" y2="6.33" stroke="#000" stroke-width="0.95"/><line x1="4.75" y1="9.66" x2="135.20" y2="9.66" stroke="#000" stroke-width="0.95"/><line x1="4.75" y1="12.99" x2="135.20" y2="12.99" stroke="#000" stroke-width="0.95"/><line x1="4.75" y1="16.32" x2="135.20" y2="16.32" stroke="#000" stroke-width="0.95"/><line x1="4.75" y1="19.65" x2="135.20" y2="19.65" stroke="#000" stroke-width="0.95"/><line x1="4.75" y1="22.98" x2="135.20" y2="22.98" stroke="#000" stroke-width="0.95"/><line x1="4.75" y1="26.31" x2="135.20" y2="26.31" stroke="#000" stroke-width="0.95"/><line x1="4.75" y1="29.64" x2="135.20" y2="29.64" stroke="#000" stroke-width="0.95"/><line x1="4.75" y1="32.97" x2="135.20" y2="32.97" stroke="#000" stroke-width="0.95"/><line x1="4.75" y1="36.30" x2="135.20" y2="36.30" stroke="#000" stroke-width="0.95"/><line x1="4.75" y1="39.63" x2="135.20" y2="39.63" stroke="#000" stroke-width="0.95"/><line x1="4.75" y1="42.96" x2="135.20" y2="42.96" stroke="#000" stroke-width="0.95"/><rect x="4.7" y="45.5" width="15" height="0.8" fill="#777"/><rect x="6.26" y="51.70" width="4.55" height="0.9" fill="#555"/><rect x="14.97" y="51.70" width="7.94" height="0.9" fill="#555"/><rect x="28.22" y="51.70" width="7.99" height="0.9" fill="#555"/><rect x="41.54" y="51.70" width="7.99" height="0.9" fill="#555"/><rect x="54.86" y="51.70" width="7.99" height="0.9" fill="#555"/><rect x="68.18" y="51.70" width="7.99" height="0.9" fill="#555"/><rect x="81.50" y="51.70" width="7.99" height="0.9" fill="#555"/><rect x="94.82" y="51.70" width="7.99" height="0.9" fill="#555"/><rect x="108.44" y="51.70" width="8.89" height="0.9" fill="#555"/><rect x="123.28" y="51.70" width="8.94" height="0.9" fill="#555"/><rect x="6.45" y="55.91" width="4.17" height="0.8" fill="#888"/><rect x="15.30" y="55.91" width="7.28" height="0.8" fill="#888"/><rect x="33.72" y="55.91" width="4.66" height="0.8" fill="#888"/><rect x="47.04" y="55.91" width="4.66" height="0.8" fill="#888"/><rect x="60.36" y="55.91" width="4.66" height="0.8" fill="#888"/><rect x="73.68" y="55.91" width="4.66" height="0.8" fill="#888"/><rect x="87.00" y="55.91" width="4.66" height="0.8" fill="#888"/><rect x="100.32" y="55.91" width="4.66" height="0.8" fill="#888"/><rect x="111.65" y="55.91" width="8.15" height="0.8" fill="#888"/><rect x="126.50" y="55.91" width="8.20" height="0.8" fill="#888"/><rect x="6.45" y="59.24" width="4.17" height="0.8" fill="#888"/><rect x="15.30" y="59.24" width="7.28" height="0.8" fill="#888"/><rect x="33.72" y="59.24" width="4.66" height="0.8" fill="#888"/><rect x="47.04" y="59.24" width="4.66" height="0.8" fill="#888"/><rect x="60.36" y="59.24" width="4.66" height="0.8" fill="#888"/><rect x="73.68" y="59.24" width="4.66" height="0.8" fill="#888"/><rect x="87.00" y="59.24" width="4.66" height="0.8" fill="#888"/><rect x="100.32" y="59.24" width="4.66" height="0.8" fill="#888"/><rect x="111.65" y="59.24" width="8.15" height="0.8" fill="#888"/><rect x="126.50" y="59.24" width="8.20" height="0.8" fill="#888"/><rect x="6.45" y="62.57" width="4.17" height="0.8" fill="#888"/><rect x="15.30" y="62.57" width="7.28" height="0.8" fill="#888"/><rect x="33.72" y="62.57" width="4.66" height="0.8" fill="#888"/><rect x="47.04" y="62.57" width="4.66" height="0.8" fill="#888"/><rect x="60.36" y="62.57" width="4.66" height="0.8" fill="#888"/><rect x="73.68" y="62.57" width="4.66" height="0.8" fill="#888"/><rect x="87.00" y="62.57" width="4.66" height="0.8" fill="#888"/><rect x="100.32" y="62.57" width="4.66" height="0.8" fill="#888"/><rect x="111.65" y="62.57" width="8.15" height="0.8" fill="#888"/><rect x="126.50" y="62.57" width="8.20" height="0.8" fill="#888"/><rect x="6.45" y="65.90" width="4.17" height="0.8" fill="#888"/><rect x="15.30" y="65.90" width="7.28" height="0.8" fill="#888"/><rect x="33.72" y="65.90" width="4.66" height="0.8" fill="#888"/><rect x="47.04" y="65.90" width="4.66" height="0.8" fill="#888"/><rect x="60.36" y="65.90" width="4.66" height="0.8" fill="#888"/><rect x="73.68" y="65.90" width="4.66" height="0.8" fill="#888"/><rect x="87.00" y="65.90" width="4.66" height="0.8" fill="#888"/><rect x="100.32" y="65.90" width="4.66" height="0.8" fill="#888"/><rect x="111.65" y="65.90" width="8.15" height="0.8" fill="#888"/><rect x="126.50" y="65.90" width="8.20" height="0.8" fill="#888"/><rect x="6.45" y="69.23" width="4.17" height="0.8" fill="#888"/><rect x="15.30" y="69.23" width="7.28" height="0.8" fill="#888"/><rect x="33.72" y="69.23" width="4.66" height="0.8" fill="#888"/><rect x="47.04" y="69.23" width="4.66" height="0.8" fill="#888"/><rect x="60.36" y="69.23" width="4.66" height="0.8" fill="#888"/><rect x="73.68" y="69.23" width="4.66" height="0.8" fill="#888"/><rect x="87.00" y="69.23" width="4.66" height="0.8" fill="#888"/><rect x="100.32" y="69.23" width="4.66" height="0.8" fill="#888"/><rect x="111.65" y="69.23" width="8.15" height="0.8" fill="#888"/><rect x="126.50" y="69.23" width="8.20" height="0.8" fill="#888"/><rect x="6.45" y="72.56" width="4.17" height="0.8" fill="#888"/><rect x="15.30" y="72.56" width="7.28" height="0.8" fill="#888"/><rect x="33.72" y="72.56" width="4.66" height="0.8" fill="#888"/><rect x="47.04" y="72.56" width="4.66" height="0.8" fill="#888"/><rect x="60.36" y="72.56" width="4.66" height="0.8" fill="#888"/><rect x="73.68" y="72.56" width="4.66" height="0.8" fill="#888"/><rect x="87.00" y="72.56" width="4.66" height="0.8" fill="#888"/><rect x="100.32" y="72.56" width="4.66" height="0.8" fill="#888"/><rect x="111.65" y="72.56" width="8.15" height="0.8" fill="#888"/><rect x="126.50" y="72.56" width="8.20" height="0.8" fill="#888"/><rect x="6.45" y="75.89" width="4.17" height="0.8" fill="#888"/><rect x="15.30" y="75.89" width="7.28" height="0.8" fill="#888"/><rect x="33.72" y="75.89" width="4.66" height="0.8" fill="#888"/><rect x="47.04" y="75.89" width="4.66" height="0.8" fill="#888"/><rect x="60.36" y="75.89" width="4.66" height="0.8" fill="#888"/><rect x="73.68" y="75.89" width="4.66" height="0.8" fill="#888"/><rect x="87.00" y="75.89" width="4.66" height="0.8" fill="#888"/><rect x="100.32" y="75.89" width="4.66" height="0.8" fill="#888"/><rect x="111.65" y="75.89" width="8.15" height="0.8" fill="#888"/><rect x="126.50" y="75.89" width="8.20" height="0.8" fill="#888"/><rect x="6.45" y="79.22" width="4.17" height="0.8" fill="#888"/><rect x="15.30" y="79.22" width="7.28" height="0.8" fill="#888"/><rect x="33.72" y="79.22" width="4.66" height="0.8" fill="#888"/><rect x="47.04" y="79.22" width="4.66" height="0.8" fill="#888"/><rect x="60.36" y="79.22" width="4.66" height="0.8" fill="#888"/><rect x="73.68" y="79.22" width="4.66" height="0.8" fill="#888"/><rect x="87.00" y="79.22" width="4.66" height="0.8" fill="#888"/><rect x="100.32" y="79.22" width="4.66" height="0.8" fill="#888"/><rect x="111.65" y="79.22" width="8.15" height="0.8" fill="#888"/><rect x="126.50" y="79.22" width="8.20" height="0.8" fill="#888"/><rect x="6.45" y="82.55" width="4.17" height="0.8" fill="#888"/><rect x="15.30" y="82.55" width="7.28" height="0.8" fill="#888"/><rect x="33.72" y="82.55" width="4.66" height="0.8" fill="#888"/><rect x="47.04" y="82.55" width="4.66" height="0.8" fill="#888"/><rect x="60.36" y="82.55" width="4.66" height="0.8" fill="#888"/><rect x="73.68" y="82.55" width="4.66" height="0.8" fill="#888"/><rect x="87.00" y="82.55" width="4.66" height="0.8" fill="#888"/><rect x="100.32" y="82.55" width="4.66" height="0.8" fill="#888"/><rect x="111.65" y="82.55" width="8.15" height="0.8" fill="#888"/><rect x="126.50" y="82.55" width="8.20" height="0.8" fill="#888"/><rect x="6.45" y="85.88" width="4.17" height="0.8" fill="#888"/><rect x="15.30" y="85.88" width="7.28" height="0.8" fill="#888"/><rect x="33.72" y="85.88" width="4.66" height="0.8" fill="#888"/><rect x="47.04" y="85.88" width="4.66" height="0.8" fill="#888"/><rect x="60.36" y="85.88" width="4.66" height="0.8" fill="#888"/><rect x="73.68" y="85.88" width="4.66" height="0.8" fill="#888"/><rect x="87.00" y="85.88" width="4.66" height="0.8" fill="#888"/><rect x="100.32" y="85.88" width="4.66" height="0.8" fill="#888"/><rect x="111.65" y="85.88" width="8.15" height="0.8" fill="#888"/><rect x="126.50" y="85.88" width="8.20" height="0.8" fill="#888"/><rect x="6.45" y="89.21" width="4.17" height="0.8" fill="#888"/><rect x="15.30" y="89.21" width="7.28" height="0.8" fill="#888"/><rect x="33.72" y="89.21" width="4.66" height="0.8" fill="#888"/><rect x="47.04" y="89.21" width="4.66" height="0.8" fill="#888"/><rect x="60.36" y="89.21" width="4.66" height="0.8" fill="#888"/><rect x="73.68" y="89.21" width="4.66" height="0.8" fill="#888"/><rect x="87.00" y="89.21" width="4.66" height="0.8" fill="#888"/><rect x="100.32" y="89.21" width="4.66" height="0.8" fill="#888"/><rect x="111.65" y="89.21" width="8.15" height="0.8" fill="#888"/><rect x="126.50" y="89.21" width="8.20" height="0.8" fill="#888"/><line x1="4.75" y1="49.70" x2="4.75" y2="91.32" stroke="#000" stroke-width="0.95"/><line x1="12.32" y1="49.70" x2="12.32" y2="91.32" stroke="#000" stroke-width="0.95"/><line x1="25.56" y1="49.70" x2="25.56" y2="91.32" stroke="#000" stroke-width="0.95"/><line x1="38.88" y1="49.70" x2="38.88" y2="91.32" stroke="#000" stroke-width="0.95"/><line x1="52.20" y1="49.70" x2="52.20" y2="91.32" stroke="#000" stroke-width="0.95"/><line x1="65.52" y1="49.70" x2="65.52" y2="91.32" stroke="#000" stroke-width="0.95"/><line x1="78.84" y1="49.70" x2="78.84" y2="91.32" stroke="#000" stroke-width="0.95"/><line x1="92.16" y1="49.70" x2="92.16" y2="91.32" stroke="#000" stroke-width="0.95"/><line x1="105.48" y1="49.70" x2="105.48" y2="91.32" stroke="#000" stroke-width="0.95"/><line x1="120.30" y1="49.70" x2="120.30" y2="91.32" stroke="#000" stroke-width="0.95"/><line x1="135.20" y1="49.70" x2="135.20" y2="91.32" stroke="#000" stroke-width="0.95"/><line x1="4.75" y1="49.70" x2="135.20" y2="49.70" stroke="#000" stroke-width="0.95"/><line x1="4.75" y1="54.70" x2="135.20" y2="54.70" stroke="#000" stroke-width="0.95"/><line x1="4.75" y1="58.02" x2="135.20" y2="58.02" stroke="#000" stroke-width="0.95"/><line x1="4.75" y1="61.35" x2="135.20" y2="61.35" stroke="#000" stroke-width="0.95"/><line x1="4.75" y1="64.69" x2="135.20" y2="64.69" stroke="#000" stroke-width="0.95"/><line x1="4.75" y1="68.02" x2="135.20" y2="68.02" stroke="#000" stroke-width="0.95"/><line x1="4.75" y1="71.34" x2="135.20" y2="71.34" stroke="#000" stroke-width="0.95"/><line x1="4.75" y1="74.67" x2="135.20" y2="74.67" stroke="#000" stroke-width="0.95"/><line x1="4.75" y1="78.00" x2="135.20" y2="78.00" stroke="#000" stroke-width="0.95"/><line x1="4.75" y1="81.33" x2="135.20" y2="81.33" stroke="#000" stroke-width="0.95"/><line x1="4.75" y1="84.66" x2="135.20" y2="84.66" stroke="#000" stroke-width="0.95"/><line x1="4.75" y1="87.99" x2="135.20" y2="87.99" stroke="#000" stroke-width="0.95"/><line x1="4.75" y1="91.32" x2="135.20" y2="91.32" stroke="#000" stroke-width="0.95"/><rect x="4.7" y="94.8" width="8" height="0.7" fill="#999"/><rect x="128" y="94.8" width="7" height="0.7" fill="#999"/></svg>
<div class="abs" style="left:72px;top:172px;width:140px;height:99px;background:rgba(50,54,57,.5)"></div>
<svg class="abs" style="left:72px;top:320px" width="140" height="99" viewBox="0 0 140 99"><rect x="0" y="0" width="140" height="99" fill="#fff"/><rect x="6.45" y="4.21" width="4.17" height="0.8" fill="#888"/><rect x="15.30" y="4.21" width="7.28" height="0.8" fill="#888"/><rect x="33.72" y="4.21" width="4.66" height="0.8" fill="#888"/><rect x="47.04" y="4.21" width="4.66" height="0.8" fill="#888"/><rect x="60.36" y="4.21" width="4.66" height="0.8" fill="#888"/><rect x="73.68" y="4.21" width="4.66" height="0.8" fill="#888"/><rect x="87.00" y="4.21" width="4.66" height="0.8" fill="#888"/><rect x="100.32" y="4.21" width="4.66" height="0.8" fill="#888"/><rect x="111.65" y="4.21" width="8.15" height="0.8" fill="#888"/><rect x="126.50" y="4.21" width="8.20" height="0.8" fill="#888"/><rect x="6.45" y="7.54" width="4.17" height="0.8" fill="#888"/><rect x="15.30" y="7.54" width="7.28" height="0.8" fill="#888"/><rect x="33.72" y="7.54" width="4.66" height="0.8" fill="#888"/><rect x="47.04" y="7.54" width="4.66" height="0.8" fill="#888"/><rect x="60.36" y="7.54" width="4.66" height="0.8" fill="#888"/><rect x="73.68" y="7.54" width="4.66" height="0.8" fill="#888"/><rect x="87.00" y="7.54" width="4.66" height="0.8" fill="#888"/><rect x="100.32" y="7.54" width="4.66" height="0.8" fill="#888"/><rect x="111.65" y="7.54" width="8.15" height="0.8" fill="#888"/><rect x="126.50" y="7.54" width="8.20" height="0.8" fill="#888"/><rect x="6.45" y="10.88" width="4.17" height="0.8" fill="#888"/><rect x="15.30" y="10.88" width="7.28" height="0.8" fill="#888"/><rect x="33.72" y="10.88" width="4.66" height="0.8" fill="#888"/><rect x="47.04" y="10.88" width="4.66" height="0.8" fill="#888"/><rect x="60.36" y="10.88" width="4.66" height="0.8" fill="#888"/><rect x="73.68" y="10.88" width="4.66" height="0.8" fill="#888"/><rect x="87.00" y="10.88" width="4.66" height="0.8" fill="#888"/><rect x="100.32" y="10.88" width="4.66" height="0.8" fill="#888"/><rect x="111.65" y="10.88" width="8.15" height="0.8" fill="#888"/><rect x="126.50" y="10.88" width="8.20" height="0.8" fill="#888"/><rect x="6.45" y="14.21" width="4.17" height="0.8" fill="#888"/><rect x="15.30" y="14.21" width="7.28" height="0.8" fill="#888"/><rect x="33.72" y="14.21" width="4.66" height="0.8" fill="#888"/><rect x="47.04" y="14.21" width="4.66" height="0.8" fill="#888"/><rect x="60.36" y="14.21" width="4.66" height="0.8" fill="#888"/><rect x="73.68" y="14.21" width="4.66" height="0.8" fill="#888"/><rect x="87.00" y="14.21" width="4.66" height="0.8" fill="#888"/><rect x="100.32" y="14.21" width="4.66" height="0.8" fill="#888"/><rect x="111.65" y="14.21" width="8.15" height="0.8" fill="#888"/><rect x="126.50" y="14.21" width="8.20" height="0.8" fill="#888"/><rect x="6.45" y="17.54" width="4.17" height="0.8" fill="#888"/><rect x="15.30" y="17.54" width="7.28" height="0.8" fill="#888"/><rect x="33.72" y="17.54" width="4.66" height="0.8" fill="#888"/><rect x="47.04" y="17.54" width="4.66" height="0.8" fill="#888"/><rect x="60.36" y="17.54" width="4.66" height="0.8" fill="#888"/><rect x="73.68" y="17.54" width="4.66" height="0.8" fill="#888"/><rect x="87.00" y="17.54" width="4.66" height="0.8" fill="#888"/><rect x="100.32" y="17.54" width="4.66" height="0.8" fill="#888"/><rect x="111.65" y="17.54" width="8.15" height="0.8" fill="#888"/><rect x="126.50" y="17.54" width="8.20" height="0.8" fill="#888"/><rect x="6.45" y="20.86" width="4.17" height="0.8" fill="#888"/><rect x="15.30" y="20.86" width="7.28" height="0.8" fill="#888"/><rect x="33.72" y="20.86" width="4.66" height="0.8" fill="#888"/><rect x="47.04" y="20.86" width="4.66" height="0.8" fill="#888"/><rect x="60.36" y="20.86" width="4.66" height="0.8" fill="#888"/><rect x="73.68" y="20.86" width="4.66" height="0.8" fill="#888"/><rect x="87.00" y="20.86" width="4.66" height="0.8" fill="#888"/><rect x="100.32" y="20.86" width="4.66" height="0.8" fill="#888"/><rect x="111.65" y="20.86" width="8.15" height="0.8" fill="#888"/><rect x="126.50" y="20.86" width="8.20" height="0.8" fill="#888"/><rect x="6.45" y="24.19" width="4.17" height="0.8" fill="#888"/><rect x="15.30" y="24.19" width="7.28" height="0.8" fill="#888"/><rect x="33.72" y="24.19" width="4.66" height="0.8" fill="#888"/><rect x="47.04" y="24.19" width="4.66" height="0.8" fill="#888"/><rect x="60.36" y="24.19" width="4.66" height="0.8" fill="#888"/><rect x="73.68" y="24.19" width="4.66" height="0.8" fill="#888"/><rect x="87.00" y="24.19" width="4.66" height="0.8" fill="#888"/><rect x="100.32" y="24.19" width="4.66" height="0.8" fill="#888"/><rect x="111.65" y="24.19" width="8.15" height="0.8" fill="#888"/><rect x="126.50" y="24.19" width="8.20" height="0.8" fill="#888"/><rect x="6.45" y="27.52" width="4.17" height="0.8" fill="#888"/><rect x="15.30" y="27.52" width="7.28" height="0.8" fill="#888"/><rect x="33.72" y="27.52" width="4.66" height="0.8" fill="#888"/><rect x="47.04" y="27.52" width="4.66" height="0.8" fill="#888"/><rect x="60.36" y="27.52" width="4.66" height="0.8" fill="#888"/><rect x="73.68" y="27.52" width="4.66" height="0.8" fill="#888"/><rect x="87.00" y="27.52" width="4.66" height="0.8" fill="#888"/><rect x="100.32" y="27.52" width="4.66" height="0.8" fill="#888"/><rect x="111.65" y="27.52" width="8.15" height="0.8" fill="#888"/><rect x="126.50" y="27.52" width="8.20" height="0.8" fill="#888"/><rect x="6.45" y="30.85" width="4.17" height="0.8" fill="#888"/><rect x="15.30" y="30.85" width="7.28" height="0.8" fill="#888"/><rect x="33.72" y="30.85" width="4.66" height="0.8" fill="#888"/><rect x="47.04" y="30.85" width="4.66" height="0.8" fill="#888"/><rect x="60.36" y="30.85" width="4.66" height="0.8" fill="#888"/><rect x="73.68" y="30.85" width="4.66" height="0.8" fill="#888"/><rect x="87.00" y="30.85" width="4.66" height="0.8" fill="#888"/><rect x="100.32" y="30.85" width="4.66" height="0.8" fill="#888"/><rect x="111.65" y="30.85" width="8.15" height="0.8" fill="#888"/><rect x="126.50" y="30.85" width="8.20" height="0.8" fill="#888"/><rect x="6.45" y="34.18" width="4.17" height="0.8" fill="#888"/><rect x="15.30" y="34.18" width="7.28" height="0.8" fill="#888"/><rect x="33.72" y="34.18" width="4.66" height="0.8" fill="#888"/><rect x="47.04" y="34.18" width="4.66" height="0.8" fill="#888"/><rect x="60.36" y="34.18" width="4.66" height="0.8" fill="#888"/><rect x="73.68" y="34.18" width="4.66" height="0.8" fill="#888"/><rect x="87.00" y="34.18" width="4.66" height="0.8" fill="#888"/><rect x="100.32" y="34.18" width="4.66" height="0.8" fill="#888"/><rect x="111.65" y="34.18" width="8.15" height="0.8" fill="#888"/><rect x="126.50" y="34.18" width="8.20" height="0.8" fill="#888"/><rect x="6.45" y="37.51" width="4.17" height="0.8" fill="#888"/><rect x="15.30" y="37.51" width="7.28" height="0.8" fill="#888"/><rect x="33.72" y="37.51" width="4.66" height="0.8" fill="#888"/><rect x="47.04" y="37.51" width="4.66" height="0.8" fill="#888"/><rect x="60.36" y="37.51" width="4.66" height="0.8" fill="#888"/><rect x="73.68" y="37.51" width="4.66" height="0.8" fill="#888"/><rect x="87.00" y="37.51" width="4.66" height="0.8" fill="#888"/><rect x="100.32" y="37.51" width="4.66" height="0.8" fill="#888"/><rect x="111.65" y="37.51" width="8.15" height="0.8" fill="#888"/><rect x="126.50" y="37.51" width="8.20" height="0.8" fill="#888"/><rect x="6.45" y="40.84" width="4.17" height="0.8" fill="#888"/><rect x="15.30" y="40.84" width="7.28" height="0.8" fill="#888"/><rect x="33.72" y="40.84" width="4.66" height="0.8" fill="#888"/><rect x="47.04" y="40.84" width="4.66" height="0.8" fill="#888"/><rect x="60.36" y="40.84" width="4.66" height="0.8" fill="#888"/><rect x="73.68" y="40.84" width="4.66" height="0.8" fill="#888"/><rect x="87.00" y="40.84" width="4.66" height="0.8" fill="#888"/><rect x="100.32" y="40.84" width="4.66" height="0.8" fill="#888"/><rect x="111.65" y="40.84" width="8.15" height="0.8" fill="#888"/><rect x="126.50" y="40.84" width="8.20" height="0.8" fill="#888"/><rect x="6.45" y="44.17" width="4.17" height="0.8" fill="#888"/><rect x="15.30" y="44.17" width="7.28" height="0.8" fill="#888"/><rect x="33.72" y="44.17" width="4.66" height="0.8" fill="#888"/><rect x="47.04" y="44.17" width="4.66" height="0.8" fill="#888"/><rect x="60.36" y="44.17" width="4.66" height="0.8" fill="#888"/><rect x="73.68" y="44.17" width="4.66" height="0.8" fill="#888"/><rect x="87.00" y="44.17" width="4.66" height="0.8" fill="#888"/><rect x="100.32" y="44.17" width="4.66" height="0.8" fill="#888"/><rect x="111.65" y="44.17" width="8.15" height="0.8" fill="#888"/><rect x="126.50" y="44.17" width="8.20" height="0.8" fill="#888"/><rect x="6.45" y="47.50" width="4.17" height="0.8" fill="#888"/><rect x="15.30" y="47.50" width="7.28" height="0.8" fill="#888"/><rect x="33.72" y="47.50" width="4.66" height="0.8" fill="#888"/><rect x="47.04" y="47.50" width="4.66" height="0.8" fill="#888"/><rect x="60.36" y="47.50" width="4.66" height="0.8" fill="#888"/><rect x="73.68" y="47.50" width="4.66" height="0.8" fill="#888"/><rect x="87.00" y="47.50" width="4.66" height="0.8" fill="#888"/><rect x="100.32" y="47.50" width="4.66" height="0.8" fill="#888"/><rect x="111.65" y="47.50" width="8.15" height="0.8" fill="#888"/><rect x="126.50" y="47.50" width="8.20" height="0.8" fill="#888"/><rect x="6.45" y="50.83" width="4.17" height="0.8" fill="#888"/><rect x="15.30" y="50.83" width="7.28" height="0.8" fill="#888"/><rect x="33.72" y="50.83" width="4.66" height="0.8" fill="#888"/><rect x="47.04" y="50.83" width="4.66" height="0.8" fill="#888"/><rect x="60.36" y="50.83" width="4.66" height="0.8" fill="#888"/><rect x="73.68" y="50.83" width="4.66" height="0.8" fill="#888"/><rect x="87.00" y="50.83" width="4.66" height="0.8" fill="#888"/><rect x="100.32" y="50.83" width="4.66" height="0.8" fill="#888"/><rect x="111.65" y="50.83" width="8.15" height="0.8" fill="#888"/><rect x="126.50" y="50.83" width="8.20" height="0.8" fill="#888"/><rect x="6.45" y="54.16" width="4.17" height="0.8" fill="#888"/><rect x="15.30" y="54.16" width="7.28" height="0.8" fill="#888"/><rect x="33.72" y="54.16" width="4.66" height="0.8" fill="#888"/><rect x="47.04" y="54.16" width="4.66" height="0.8" fill="#888"/><rect x="60.36" y="54.16" width="4.66" height="0.8" fill="#888"/><rect x="73.68" y="54.16" width="4.66" height="0.8" fill="#888"/><rect x="87.00" y="54.16" width="4.66" height="0.8" fill="#888"/><rect x="100.32" y="54.16" width="4.66" height="0.8" fill="#888"/><rect x="111.65" y="54.16" width="8.15" height="0.8" fill="#888"/><rect x="126.50" y="54.16" width="8.20" height="0.8" fill="#888"/><rect x="6.45" y="57.49" width="4.17" height="0.8" fill="#888"/><rect x="15.30" y="57.49" width="7.28" height="0.8" fill="#888"/><rect x="33.72" y="57.49" width="4.66" height="0.8" fill="#888"/><rect x="47.04" y="57.49" width="4.66" height="0.8" fill="#888"/><rect x="60.36" y="57.49" width="4.66" height="0.8" fill="#888"/><rect x="73.68" y="57.49" width="4.66" height="0.8" fill="#888"/><rect x="87.00" y="57.49" width="4.66" height="0.8" fill="#888"/><rect x="100.32" y="57.49" width="4.66" height="0.8" fill="#888"/><rect x="111.65" y="57.49" width="8.15" height="0.8" fill="#888"/><rect x="126.50" y="57.49" width="8.20" height="0.8" fill="#888"/><rect x="6.45" y="60.82" width="4.17" height="0.8" fill="#888"/><rect x="15.30" y="60.82" width="7.28" height="0.8" fill="#888"/><rect x="33.72" y="60.82" width="4.66" height="0.8" fill="#888"/><rect x="47.04" y="60.82" width="4.66" height="0.8" fill="#888"/><rect x="60.36" y="60.82" width="4.66" height="0.8" fill="#888"/><rect x="73.68" y="60.82" width="4.66" height="0.8" fill="#888"/><rect x="87.00" y="60.82" width="4.66" height="0.8" fill="#888"/><rect x="100.32" y="60.82" width="4.66" height="0.8" fill="#888"/><rect x="111.65" y="60.82" width="8.15" height="0.8" fill="#888"/><rect x="126.50" y="60.82" width="8.20" height="0.8" fill="#888"/><rect x="6.45" y="64.15" width="4.17" height="0.8" fill="#888"/><rect x="15.30" y="64.15" width="7.28" height="0.8" fill="#888"/><rect x="33.72" y="64.15" width="4.66" height="0.8" fill="#888"/><rect x="47.04" y="64.15" width="4.66" height="0.8" fill="#888"/><rect x="60.36" y="64.15" width="4.66" height="0.8" fill="#888"/><rect x="73.68" y="64.15" width="4.66" height="0.8" fill="#888"/><rect x="87.00" y="64.15" width="4.66" height="0.8" fill="#888"/><rect x="100.32" y="64.15" width="4.66" height="0.8" fill="#888"/><rect x="111.65" y="64.15" width="8.15" height="0.8" fill="#888"/><rect x="126.50" y="64.15" width="8.20" height="0.8" fill="#888"/><rect x="6.45" y="67.48" width="4.17" height="0.8" fill="#888"/><rect x="15.30" y="67.48" width="7.28" height="0.8" fill="#888"/><rect x="33.72" y="67.48" width="4.66" height="0.8" fill="#888"/><rect x="47.04" y="67.48" width="4.66" height="0.8" fill="#888"/><rect x="60.36" y="67.48" width="4.66" height="0.8" fill="#888"/><rect x="73.68" y="67.48" width="4.66" height="0.8" fill="#888"/><rect x="87.00" y="67.48" width="4.66" height="0.8" fill="#888"/><rect x="100.32" y="67.48" width="4.66" height="0.8" fill="#888"/><rect x="111.65" y="67.48" width="8.15" height="0.8" fill="#888"/><rect x="126.50" y="67.48" width="8.20" height="0.8" fill="#888"/><line x1="4.75" y1="3.00" x2="4.75" y2="69.60" stroke="#000" stroke-width="0.95"/><line x1="12.32" y1="3.00" x2="12.32" y2="69.60" stroke="#000" stroke-width="0.95"/><line x1="25.56" y1="3.00" x2="25.56" y2="69.60" stroke="#000" stroke-width="0.95"/><line x1="38.88" y1="3.00" x2="38.88" y2="69.60" stroke="#000" stroke-width="0.95"/><line x1="52.20" y1="3.00" x2="52.20" y2="69.60" stroke="#000" stroke-width="0.95"/><line x1="65.52" y1="3.00" x2="65.52" y2="69.60" stroke="#000" stroke-width="0.95"/><line x1="78.84" y1="3.00" x2="78.84" y2="69.60" stroke="#000" stroke-width="0.95"/><line x1="92.16" y1="3.00" x2="92.16" y2="69.60" stroke="#000" stroke-width="0.95"/><line x1="105.48" y1="3.00" x2="105.48" y2="69.60" stroke="#000" stroke-width="0.95"/><line x1="120.30" y1="3.00" x2="120.30" y2="69.60" stroke="#000" stroke-width="0.95"/><line x1="135.20" y1="3.00" x2="135.20" y2="69.60" stroke="#000" stroke-width="0.95"/><line x1="4.75" y1="3.00" x2="135.20" y2="3.00" stroke="#000" stroke-width="0.95"/><line x1="4.75" y1="6.33" x2="135.20" y2="6.33" stroke="#000" stroke-width="0.95"/><line x1="4.75" y1="9.66" x2="135.20" y2="9.66" stroke="#000" stroke-width="0.95"/><line x1="4.75" y1="12.99" x2="135.20" y2="12.99" stroke="#000" stroke-width="0.95"/><line x1="4.75" y1="16.32" x2="135.20" y2="16.32" stroke="#000" stroke-width="0.95"/><line x1="4.75" y1="19.65" x2="135.20" y2="19.65" stroke="#000" stroke-width="0.95"/><line x1="4.75" y1="22.98" x2="135.20" y2="22.98" stroke="#000" stroke-width="0.95"/><line x1="4.75" y1="26.31" x2="135.20" y2="26.31" stroke="#000" stroke-width="0.95"/><line x1="4.75" y1="29.64" x2="135.20" y2="29.64" stroke="#000" stroke-width="0.95"/><line x1="4.75" y1="32.97" x2="135.20" y2="32.97" stroke="#000" stroke-width="0.95"/><line x1="4.75" y1="36.30" x2="135.20" y2="36.30" stroke="#000" stroke-width="0.95"/><line x1="4.75" y1="39.63" x2="135.20" y2="39.63" stroke="#000" stroke-width="0.95"/><line x1="4.75" y1="42.96" x2="135.20" y2="42.96" stroke="#000" stroke-width="0.95"/><line x1="4.75" y1="46.29" x2="135.20" y2="46.29" stroke="#000" stroke-width="0.95"/><line x1="4.75" y1="49.62" x2="135.20" y2="49.62" stroke="#000" stroke-width="0.95"/><line x1="4.75" y1="52.95" x2="135.20" y2="52.95" stroke="#000" stroke-width="0.95"/><line x1="4.75" y1="56.28" x2="135.20" y2="56.28" stroke="#000" stroke-width="0.95"/><line x1="4.75" y1="59.61" x2="135.20" y2="59.61" stroke="#000" stroke-width="0.95"/><line x1="4.75" y1="62.94" x2="135.20" y2="62.94" stroke="#000" stroke-width="0.95"/><line x1="4.75" y1="66.27" x2="135.20" y2="66.27" stroke="#000" stroke-width="0.95"/><line x1="4.75" y1="69.60" x2="135.20" y2="69.60" stroke="#000" stroke-width="0.95"/></svg>
<div class="abs" style="left:72px;top:320px;width:140px;height:99px;background:rgba(50,54,57,.5)"></div>
<div class="t" style="left:137.5px;top:136px;font-size:12.5px;color:#fff">1</div>
<div class="t" style="left:137.5px;top:284px;font-size:12.5px;color:#fff">2</div>
  </div>
  <div class="sbt" style="left:283px;top:56px;height:394px"></div>
  <div class="sbthumb" style="left:285px;top:73px;height:75px"></div>
  <div class="abs" style="left:287px;top:63px;width:0;height:0;border-left:4.5px solid transparent;border-right:4.5px solid transparent;border-bottom:4px solid #a3a3a3"></div>
  <div class="abs" style="left:287px;top:439px;width:0;height:0;border-left:4.5px solid transparent;border-right:4.5px solid transparent;border-top:4px solid #505050"></div>
  <div id="page">
    <div class="abs" style="left:29px;top:7px;width:783px;height:1.6px;background:#555"></div>
    <div class="t" style="left:362.5px;top:16px;font-size:19.9px;font-weight:bold">Saldo Diário</div>
    <div class="t" style="left:529px;top:54px;font-size:14.7px">Período:</div>
    <div class="t" style="left:598.5px;top:54px;font-size:14.7px">01/04/2022</div>
    <div class="t" style="left:688.5px;top:54px;font-size:14.7px">até</div>
    <div class="t" style="left:724.5px;top:54px;font-size:14.7px">30/04/2022</div>
    <div class="t" style="left:29px;top:86.5px;font-size:12px">Conta: Banco do Brasil (Banco: BANCO DO BRASIL S.A. / Agência: 1010-1 / Conta Corrente: 12345-6)</div>
    <div class="vl" style="left:27.7px;top:106.7px;height:291.6px"></div>
<div class="vl" style="left:73.2px;top:106.7px;height:291.6px"></div>
<div class="vl" style="left:152.7px;top:106.7px;height:291.6px"></div>
<div class="vl" style="left:232.7px;top:106.7px;height:291.6px"></div>
<div class="vl" style="left:312.7px;top:106.7px;height:291.6px"></div>
<div class="vl" style="left:392.7px;top:106.7px;height:291.6px"></div>
<div class="vl" style="left:472.7px;top:106.7px;height:291.6px"></div>
<div class="vl" style="left:552.7px;top:106.7px;height:291.6px"></div>
<div class="vl" style="left:632.7px;top:106.7px;height:291.6px"></div>
<div class="vl" style="left:721.7px;top:106.7px;height:291.6px"></div>
<div class="vl" style="left:811.2px;top:106.7px;height:291.6px"></div>
<div class="hl" style="left:27.7px;top:106.7px;width:785.1px"></div>
<div class="hl" style="left:27.7px;top:136.7px;width:785.1px"></div>
<div class="hl" style="left:27.7px;top:156.7px;width:785.1px"></div>
<div class="hl" style="left:27.7px;top:176.7px;width:785.1px"></div>
<div class="hl" style="left:27.7px;top:196.7px;width:785.1px"></div>
<div class="hl" style="left:27.7px;top:216.7px;width:785.1px"></div>
<div class="hl" style="left:27.7px;top:236.7px;width:785.1px"></div>
<div class="hl" style="left:27.7px;top:256.7px;width:785.1px"></div>
<div class="hl" style="left:27.7px;top:276.7px;width:785.1px"></div>
<div class="hl" style="left:27.7px;top:296.7px;width:785.1px"></div>
<div class="hl" style="left:27.7px;top:316.7px;width:785.1px"></div>
<div class="hl" style="left:27.7px;top:336.7px;width:785.1px"></div>
<div class="hl" style="left:27.7px;top:356.7px;width:785.1px"></div>
<div class="hl" style="left:27.7px;top:376.7px;width:785.1px"></div>
<div class="hl" style="left:27.7px;top:396.7px;width:785.1px"></div>
<div class="th" style="left:28.5px;top:107.5px;width:45.5px;height:30px"><span>Data</span></div>
<div class="th" style="left:74.0px;top:107.5px;width:79.5px;height:30px"><span>Dia Semana</span></div>
<div class="th" style="left:153.5px;top:107.5px;width:80.0px;height:30px"><span>Créditos</span></div>
<div class="th" style="left:233.5px;top:107.5px;width:80.0px;height:30px"><span>Débitos</span></div>
<div class="th" style="left:313.5px;top:107.5px;width:80.0px;height:30px"><span>Transferência<br>Crédito</span></div>
<div class="th" style="left:393.5px;top:107.5px;width:80.0px;height:30px"><span>Transferência<br>Débito</span></div>
<div class="th" style="left:473.5px;top:107.5px;width:80.0px;height:30px"><span>Total<br>Crédito</span></div>
<div class="th" style="left:553.5px;top:107.5px;width:80.0px;height:30px"><span>Total<br>Débito</span></div>
<div class="th" style="left:633.5px;top:107.5px;width:89.0px;height:30px"><span>Saldo<br>Dia Anterior</span></div>
<div class="th" style="left:722.5px;top:107.5px;width:89.5px;height:30px"><span>Saldo Dia</span></div>
<div class="td c" style="left:28.5px;top:137.5px;width:45.5px">01/04/2022</div>
<div class="td c" style="left:74.0px;top:137.5px;width:79.5px">Sexta-Feira</div>
<div class="td r" style="left:153.5px;top:137.5px;width:80.0px">0,00</div>
<div class="td r" style="left:233.5px;top:137.5px;width:80.0px">0,00</div>
<div class="td r" style="left:313.5px;top:137.5px;width:80.0px">0,00</div>
<div class="td r" style="left:393.5px;top:137.5px;width:80.0px">0,00</div>
<div class="td r" style="left:473.5px;top:137.5px;width:80.0px">0,00</div>
<div class="td r" style="left:553.5px;top:137.5px;width:80.0px">0,00</div>
<div class="td r" style="left:633.5px;top:137.5px;width:89.0px">276.756,82</div>
<div class="td r" style="left:722.5px;top:137.5px;width:89.5px">276.756,82</div>
<div class="td c" style="left:28.5px;top:157.5px;width:45.5px">02/04/2022</div>
<div class="td c" style="left:74.0px;top:157.5px;width:79.5px">Sábado</div>
<div class="td r" style="left:153.5px;top:157.5px;width:80.0px">0,00</div>
<div class="td r" style="left:233.5px;top:157.5px;width:80.0px">0,00</div>
<div class="td r" style="left:313.5px;top:157.5px;width:80.0px">0,00</div>
<div class="td r" style="left:393.5px;top:157.5px;width:80.0px">0,00</div>
<div class="td r" style="left:473.5px;top:157.5px;width:80.0px">0,00</div>
<div class="td r" style="left:553.5px;top:157.5px;width:80.0px">0,00</div>
<div class="td r" style="left:633.5px;top:157.5px;width:89.0px">276.756,82</div>
<div class="td r" style="left:722.5px;top:157.5px;width:89.5px">276.756,82</div>
<div class="td c" style="left:28.5px;top:177.5px;width:45.5px">03/04/2022</div>
<div class="td c" style="left:74.0px;top:177.5px;width:79.5px">Domingo</div>
<div class="td r" style="left:153.5px;top:177.5px;width:80.0px">0,00</div>
<div class="td r" style="left:233.5px;top:177.5px;width:80.0px">0,00</div>
<div class="td r" style="left:313.5px;top:177.5px;width:80.0px">0,00</div>
<div class="td r" style="left:393.5px;top:177.5px;width:80.0px">0,00</div>
<div class="td r" style="left:473.5px;top:177.5px;width:80.0px">0,00</div>
<div class="td r" style="left:553.5px;top:177.5px;width:80.0px">0,00</div>
<div class="td r" style="left:633.5px;top:177.5px;width:89.0px">276.756,82</div>
<div class="td r" style="left:722.5px;top:177.5px;width:89.5px">276.756,82</div>
<div class="td c" style="left:28.5px;top:197.5px;width:45.5px">04/04/2022</div>
<div class="td c" style="left:74.0px;top:197.5px;width:79.5px">Segunda-Feira</div>
<div class="td r" style="left:153.5px;top:197.5px;width:80.0px">0,00</div>
<div class="td r" style="left:233.5px;top:197.5px;width:80.0px">0,00</div>
<div class="td r" style="left:313.5px;top:197.5px;width:80.0px">0,00</div>
<div class="td r" style="left:393.5px;top:197.5px;width:80.0px">0,00</div>
<div class="td r" style="left:473.5px;top:197.5px;width:80.0px">0,00</div>
<div class="td r" style="left:553.5px;top:197.5px;width:80.0px">0,00</div>
<div class="td r" style="left:633.5px;top:197.5px;width:89.0px">276.756,82</div>
<div class="td r" style="left:722.5px;top:197.5px;width:89.5px">276.756,82</div>
<div class="td c" style="left:28.5px;top:217.5px;width:45.5px">05/04/2022</div>
<div class="td c" style="left:74.0px;top:217.5px;width:79.5px">Terça-Feira</div>
<div class="td r" style="left:153.5px;top:217.5px;width:80.0px">920,00</div>
<div class="td r" style="left:233.5px;top:217.5px;width:80.0px">0,00</div>
<div class="td r" style="left:313.5px;top:217.5px;width:80.0px">0,00</div>
<div class="td r" style="left:393.5px;top:217.5px;width:80.0px">0,00</div>
<div class="td r" style="left:473.5px;top:217.5px;width:80.0px">920,00</div>
<div class="td r" style="left:553.5px;top:217.5px;width:80.0px">0,00</div>
<div class="td r" style="left:633.5px;top:217.5px;width:89.0px">276.756,82</div>
<div class="td r" style="left:722.5px;top:217.5px;width:89.5px">277.676,82</div>
<div class="td c" style="left:28.5px;top:237.5px;width:45.5px">06/04/2022</div>
<div class="td c" style="left:74.0px;top:237.5px;width:79.5px">Quarta-Feira</div>
<div class="td r" style="left:153.5px;top:237.5px;width:80.0px">0,00</div>
<div class="td r" style="left:233.5px;top:237.5px;width:80.0px">0,00</div>
<div class="td r" style="left:313.5px;top:237.5px;width:80.0px">0,00</div>
<div class="td r" style="left:393.5px;top:237.5px;width:80.0px">0,00</div>
<div class="td r" style="left:473.5px;top:237.5px;width:80.0px">0,00</div>
<div class="td r" style="left:553.5px;top:237.5px;width:80.0px">0,00</div>
<div class="td r" style="left:633.5px;top:237.5px;width:89.0px">277.676,82</div>
<div class="td r" style="left:722.5px;top:237.5px;width:89.5px">277.676,82</div>
<div class="td c" style="left:28.5px;top:257.5px;width:45.5px">07/04/2022</div>
<div class="td c" style="left:74.0px;top:257.5px;width:79.5px">Quinta-Feira</div>
<div class="td r" style="left:153.5px;top:257.5px;width:80.0px">24.263,18</div>
<div class="td r" style="left:233.5px;top:257.5px;width:80.0px">(500,00)</div>
<div class="td r" style="left:313.5px;top:257.5px;width:80.0px">0,00</div>
<div class="td r" style="left:393.5px;top:257.5px;width:80.0px">0,00</div>
<div class="td r" style="left:473.5px;top:257.5px;width:80.0px">24.263,18</div>
<div class="td r" style="left:553.5px;top:257.5px;width:80.0px">(500,00)</div>
<div class="td r" style="left:633.5px;top:257.5px;width:89.0px">276.986,82</div>
<div class="td r" style="left:722.5px;top:257.5px;width:89.5px">300.750,00</div>
<div class="td c" style="left:28.5px;top:277.5px;width:45.5px">08/04/2022</div>
<div class="td c" style="left:74.0px;top:277.5px;width:79.5px">Sexta-Feira</div>
<div class="td r" style="left:153.5px;top:277.5px;width:80.0px">0,00</div>
<div class="td r" style="left:233.5px;top:277.5px;width:80.0px">0,00</div>
<div class="td r" style="left:313.5px;top:277.5px;width:80.0px">0,00</div>
<div class="td r" style="left:393.5px;top:277.5px;width:80.0px">0,00</div>
<div class="td r" style="left:473.5px;top:277.5px;width:80.0px">0,00</div>
<div class="td r" style="left:553.5px;top:277.5px;width:80.0px">0,00</div>
<div class="td r" style="left:633.5px;top:277.5px;width:89.0px">300.750,00</div>
<div class="td r" style="left:722.5px;top:277.5px;width:89.5px">300.750,00</div>
<div class="td c" style="left:28.5px;top:297.5px;width:45.5px">09/04/2022</div>
<div class="td c" style="left:74.0px;top:297.5px;width:79.5px">Sábado</div>
<div class="td r" style="left:153.5px;top:297.5px;width:80.0px">0,00</div>
<div class="td r" style="left:233.5px;top:297.5px;width:80.0px">0,00</div>
<div class="td r" style="left:313.5px;top:297.5px;width:80.0px">0,00</div>
<div class="td r" style="left:393.5px;top:297.5px;width:80.0px">0,00</div>
<div class="td r" style="left:473.5px;top:297.5px;width:80.0px">0,00</div>
<div class="td r" style="left:553.5px;top:297.5px;width:80.0px">0,00</div>
<div class="td r" style="left:633.5px;top:297.5px;width:89.0px">300.750,00</div>
<div class="td r" style="left:722.5px;top:297.5px;width:89.5px">300.750,00</div>
<div class="td c" style="left:28.5px;top:317.5px;width:45.5px">10/04/2022</div>
<div class="td c" style="left:74.0px;top:317.5px;width:79.5px">Domingo</div>
<div class="td r" style="left:153.5px;top:317.5px;width:80.0px">0,00</div>
<div class="td r" style="left:233.5px;top:317.5px;width:80.0px">0,00</div>
<div class="td r" style="left:313.5px;top:317.5px;width:80.0px">0,00</div>
<div class="td r" style="left:393.5px;top:317.5px;width:80.0px">0,00</div>
<div class="td r" style="left:473.5px;top:317.5px;width:80.0px">0,00</div>
<div class="td r" style="left:553.5px;top:317.5px;width:80.0px">0,00</div>
<div class="td r" style="left:633.5px;top:317.5px;width:89.0px">300.750,00</div>
<div class="td r" style="left:722.5px;top:317.5px;width:89.5px">300.750,00</div>
<div class="td c" style="left:28.5px;top:337.5px;width:45.5px">11/04/2022</div>
<div class="td c" style="left:74.0px;top:337.5px;width:79.5px">Segunda-Feira</div>
<div class="td r" style="left:153.5px;top:337.5px;width:80.0px">0,00</div>
<div class="td r" style="left:233.5px;top:337.5px;width:80.0px">0,00</div>
<div class="td r" style="left:313.5px;top:337.5px;width:80.0px">0,00</div>
<div class="td r" style="left:393.5px;top:337.5px;width:80.0px">0,00</div>
<div class="td r" style="left:473.5px;top:337.5px;width:80.0px">0,00</div>
<div class="td r" style="left:553.5px;top:337.5px;width:80.0px">0,00</div>
<div class="td r" style="left:633.5px;top:337.5px;width:89.0px">300.750,00</div>
<div class="td r" style="left:722.5px;top:337.5px;width:89.5px">300.750,00</div>
<div class="td c" style="left:28.5px;top:357.5px;width:45.5px">12/04/2022</div>
<div class="td c" style="left:74.0px;top:357.5px;width:79.5px">Terça-Feira</div>
<div class="td r" style="left:153.5px;top:357.5px;width:80.0px">0,00</div>
<div class="td r" style="left:233.5px;top:357.5px;width:80.0px">0,00</div>
<div class="td r" style="left:313.5px;top:357.5px;width:80.0px">0,00</div>
<div class="td r" style="left:393.5px;top:357.5px;width:80.0px">0,00</div>
<div class="td r" style="left:473.5px;top:357.5px;width:80.0px">0,00</div>
<div class="td r" style="left:553.5px;top:357.5px;width:80.0px">0,00</div>
<div class="td r" style="left:633.5px;top:357.5px;width:89.0px">300.750,00</div>
<div class="td r" style="left:722.5px;top:357.5px;width:89.5px">300.750,00</div>
<div class="td c" style="left:28.5px;top:377.5px;width:45.5px">13/04/2022</div>
<div class="td c" style="left:74.0px;top:377.5px;width:79.5px">Quarta-Feira</div>
<div class="td r" style="left:153.5px;top:377.5px;width:80.0px">0,00</div>
<div class="td r" style="left:233.5px;top:377.5px;width:80.0px">0,00</div>
<div class="td r" style="left:313.5px;top:377.5px;width:80.0px">0,00</div>
<div class="td r" style="left:393.5px;top:377.5px;width:80.0px">0,00</div>
<div class="td r" style="left:473.5px;top:377.5px;width:80.0px">0,00</div>
<div class="td r" style="left:553.5px;top:377.5px;width:80.0px">0,00</div>
<div class="td r" style="left:633.5px;top:377.5px;width:89.0px">300.750,00</div>
<div class="td r" style="left:722.5px;top:377.5px;width:89.5px">300.750,00</div>
  </div>
  <div class="sbt" style="left:1225px;top:56px;height:394px"></div>
  <div class="sbthumb" style="left:1227px;top:75px;height:21px"></div>
  <div class="abs" style="left:1229px;top:63px;width:0;height:0;border-left:4.5px solid transparent;border-right:4.5px solid transparent;border-bottom:4px solid #505050"></div>
  <div class="abs" style="left:1229px;top:439px;width:0;height:0;border-left:4.5px solid transparent;border-right:4.5px solid transparent;border-top:4px solid #505050"></div>
</div>

<div class="t" style="left:1204.7px;top:662.3px;font-size:8px;color:#555">Última Atualização: 10/09/2019 - 23:59</div>
<div class="t" style="left:230px;top:744.5px;font-size:8.4px;color:#555">Copyright © <span style="color:#222">EASYMARINE</span> 2022</div>
<svg class="abs" style="left:71px;top:734px" width="26" height="26" viewBox="0 0 26 26"><clipPath id="lc"><rect x="0.3" y="0" width="25.3" height="12.5"/></clipPath><g clip-path="url(#lc)"><path d="M-11.3 3.90 Q-8.05 1.10 -4.8 3.90 T1.7 3.90 T8.2 3.90 T14.7 3.90 T21.2 3.90 T27.7 3.90 T34.2 3.90" fill="none" stroke="#6f8792" stroke-width="1.3"/><path d="M-11.3 6.40 Q-8.05 3.60 -4.8 6.40 T1.7 6.40 T8.2 6.40 T14.7 6.40 T21.2 6.40 T27.7 6.40 T34.2 6.40" fill="none" stroke="#6f8792" stroke-width="1.3"/><path d="M-11.3 8.90 Q-8.05 6.10 -4.8 8.90 T1.7 8.90 T8.2 8.90 T14.7 8.90 T21.2 8.90 T27.7 8.90 T34.2 8.90" fill="none" stroke="#6f8792" stroke-width="1.3"/><path d="M-11.3 11.40 Q-8.05 8.60 -4.8 11.40 T1.7 11.40 T8.2 11.40 T14.7 11.40 T21.2 11.40 T27.7 11.40 T34.2 11.40" fill="none" stroke="#6f8792" stroke-width="1.3"/></g><text x="13" y="19.8" text-anchor="middle" font-family="Liberation Sans" font-weight="bold" font-size="6.4" fill="#5c737e" textLength="23" lengthAdjust="spacing">EASY</text><text x="13" y="25" text-anchor="middle" font-family="Liberation Sans" font-weight="bold" font-size="3.3" fill="#5c737e" textLength="22.5" lengthAdjust="spacingAndGlyphs">MARINE</text></svg>
<div class="abs" style="left:1364px;top:45px;width:1px;height:612px;background:#ddd"></div>
</body></html>
